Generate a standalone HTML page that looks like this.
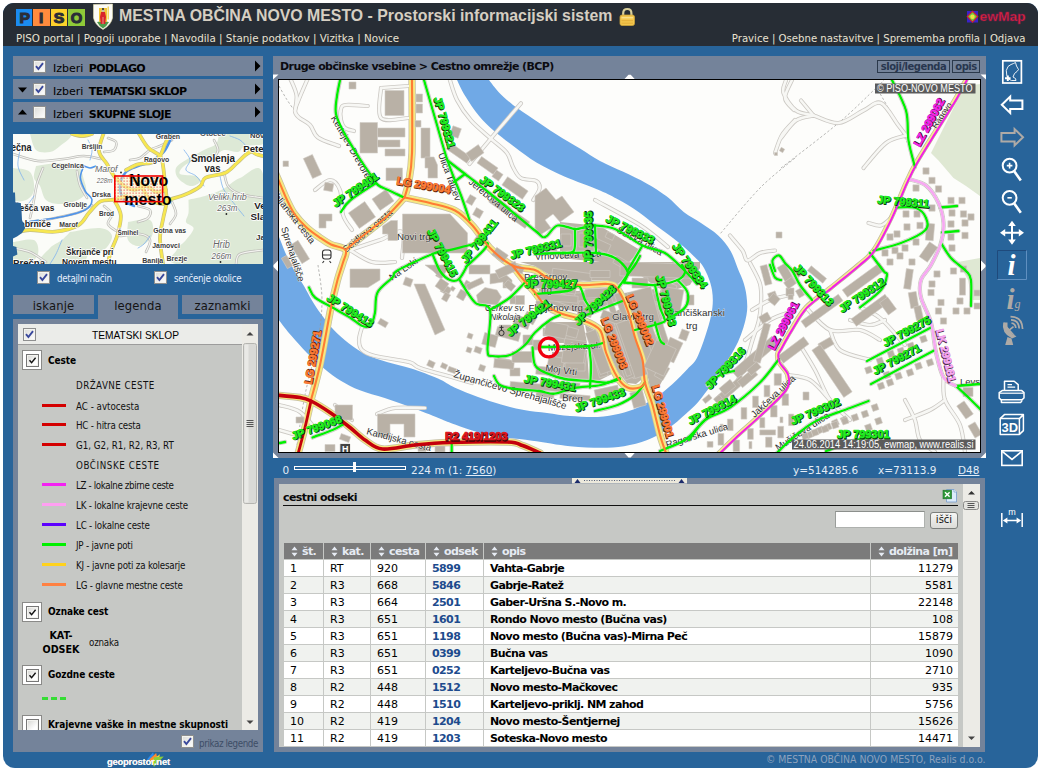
<!DOCTYPE html>
<html lang="sl">
<head>
<meta charset="utf-8">
<title>MESTNA OBČINA NOVO MESTO - Prostorski informacijski sistem</title>
<style>
html,body{margin:0;padding:0;background:#fff;}
body{width:1041px;height:772px;position:relative;overflow:hidden;font-family:"DejaVu Sans","Liberation Sans",sans-serif;font-size:11px;color:#000;}
.abs{position:absolute;}
#wrap{position:absolute;left:3px;top:3px;width:1035px;height:765px;background:#28649a;border-radius:11px 11px 12px 12px;overflow:hidden;}
#hdr{position:absolute;left:0;top:0;width:1035px;height:43px;background:#272d35;}
.vd{font-family:"DejaVu Sans","Liberation Sans",sans-serif;}
.ar{font-family:"Liberation Sans",sans-serif;}
.th{font-family:"DejaVu Sans Condensed","Liberation Sans",sans-serif;}
.nw{white-space:nowrap;}
#title{left:119px;top:7.2px;font:bold 15.85px "Liberation Sans",sans-serif;color:#d6cfc2;white-space:nowrap;}
.nav{top:32px;font-size:10.34px;color:#e9e2d2;white-space:nowrap;line-height:13px;}
.gp{background:#74839a;}
.row{left:13px;width:250px;height:20px;background:#74839a;}
.row span{position:absolute;top:6px;left:40px;font-size:11px;line-height:14px;white-space:nowrap;}
.cb{position:absolute;width:11px;height:11px;border:1px solid #8e8f8f;background:linear-gradient(135deg,#dcdcd8,#ffffff);box-shadow:inset 0 0 0 1px #f4f4f0;}
.cb svg{position:absolute;left:1px;top:1px;}
.tri{position:absolute;width:0;height:0;}
.tabt{top:298.7px;text-align:center;font-size:11.6px;line-height:14px;color:#141414;letter-spacing:0.15px;}
#leg .t{position:absolute;left:58px;font-family:"DejaVu Sans Condensed","Liberation Sans",sans-serif;font-size:9.7px;letter-spacing:-0.2px;line-height:13px;white-space:nowrap;color:#111;}
#leg .b{position:absolute;left:30px;font-family:"DejaVu Sans Condensed","Liberation Sans",sans-serif;font-weight:bold;font-size:10px;letter-spacing:-0.1px;line-height:13px;white-space:nowrap;color:#000;}
#leg .ln{position:absolute;left:24px;width:24px;height:3px;}
#leg .bx{position:absolute;left:4px;width:18px;height:18px;background:#fff;border:1px solid #8a8a88;}
#leg .bx .cb{left:3px;top:3px;border-color:#777;background:linear-gradient(135deg,#d4d4d0,#fff 70%);}
.row b{letter-spacing:-0.6px;margin-left:2px;}
.btn1{top:60px;height:11px;border:1px solid #2b394b;font-weight:bold;font-size:10px;line-height:11px;text-align:center;color:#27364e;letter-spacing:-0.5px;}
.sc{top:464px;font-size:10.5px;line-height:13px;color:#e3ecf7;}
#tb{position:absolute;left:284px;top:543px;width:675px;}
#tb .r{position:absolute;left:0;height:16px;width:675px;}
#tb .c{position:absolute;top:0;height:16px;line-height:16px;font-size:11px;white-space:nowrap;box-sizing:border-box;padding:1px 6px 0 6px;line-height:15px;overflow:hidden;}
#tb .h .c{background:#7b7b7b;color:#e6ebf3;font-weight:bold;letter-spacing:-0.6px;padding-left:18px;}
#tb .o .c{background:#ffffff;}
#tb .e .c{background:#f0f2ef;}
#tb .c1{left:0;width:39px;}#tb .c2{left:40px;width:46px;}#tb .c3{left:87px;width:54px;}#tb .c4{left:142px;width:57px;}#tb .c5{left:200px;width:386px;}#tb .c6{left:587px;width:87px;}
#tb .o .c4,#tb .e .c4{font-weight:bold;color:#1d4b8d;letter-spacing:-0.6px;}
#tb .o .c5,#tb .e .c5{font-weight:bold;letter-spacing:-0.6px;}
#tb .o .c6,#tb .e .c6{text-align:right;padding-right:5px;}
#tb .si{position:absolute;left:6.5px;top:3px;}
</style>
</head>
<body>
<div id="wrap"><div id="hdr"></div></div>
<!-- header -->
<div class="abs" style="left:16px;top:9px;width:16px;height:17px;background:#1b8cf0;"></div>
<div class="abs" style="left:33px;top:9px;width:17px;height:17px;background:#ff8b3d;"></div>
<div class="abs" style="left:51px;top:9px;width:16px;height:17px;background:#fdd22b;"></div>
<div class="abs" style="left:68px;top:9px;width:17px;height:17px;background:#8fca38;"></div>
<svg class="abs" style="left:16px;top:9px;" width="70" height="17" viewBox="0 0 70 17">
<g font-family="Liberation Sans, sans-serif" font-weight="bold" font-size="15" fill="#2a2e38" stroke="#2a2e38" stroke-width="1.1" text-anchor="middle">
<text x="8.7" y="13.9" textLength="10.5" lengthAdjust="spacingAndGlyphs">P</text>
<text x="25.2" y="13.9">I</text>
<text x="43" y="13.9" textLength="10.5" lengthAdjust="spacingAndGlyphs">S</text>
<text x="60.5" y="13.9" textLength="11.5" lengthAdjust="spacingAndGlyphs">O</text>
</g></svg>
<svg class="abs" style="left:92px;top:3px;" width="22" height="28" viewBox="0 0 22 28">
<path d="M1.5 1.5 L20.5 1 L20.5 15 Q19 22 11 26.5 Q3 22 1.5 15 Z" fill="#fbfbf6" stroke="#e8e0b0" stroke-width="0.6"/>
<path d="M5 19 Q11 17.5 17 19 Q15 23 11 25.5 Q7 23 5 19Z" fill="#4f9a4a"/>
<rect x="7" y="5" width="8" height="14" fill="#f2c736"/>
<rect x="15.6" y="3.5" width="1.2" height="13" fill="#f0d040"/>
<path d="M9 9 L13 9 L14 14 L13.2 21 L8.8 21 L8 14 Z" fill="#d8232a"/>
<circle cx="11" cy="7.6" r="1.5" fill="#c9b9a8"/>
<rect x="10" y="5.2" width="2" height="1.6" fill="#333"/>
<rect x="10.6" y="14" width="0.8" height="7" fill="#f5b0a0"/>
</svg>
<div id="title" class="abs">MESTNA OBČINA NOVO MESTO - Prostorski informacijski sistem</div>
<!-- lock -->
<svg class="abs" style="left:618px;top:7px;" width="18" height="20" viewBox="0 0 18 20">
<path d="M5.2 9 V6.2 Q5.2 2 9.3 2 Q13.4 2 13.4 6.2 V9" fill="none" stroke="#d9cf9a" stroke-width="2.2"/>
<rect x="2" y="8" width="14.5" height="10.5" rx="2" fill="#f3c64e" stroke="#caa23a" stroke-width="0.8"/>
<rect x="3.5" y="10" width="11.5" height="1.4" fill="#f9e08a"/>
<rect x="3.5" y="13" width="11.5" height="1.2" fill="#e6b23c"/>
<rect x="3.5" y="15.6" width="11.5" height="1.2" fill="#e6b23c"/>
</svg>
<div class="abs nav" id="navl" style="left:16px;">PISO portal | Pogoji uporabe | Navodila | Stanje podatkov | Vizitka | Novice</div>
<div class="abs nav" id="navr" style="right:15.5px;font-size:10.14px;">Pravice | Osebne nastavitve | Sprememba profila | Odjava</div>
<!-- ewmap logo -->
<svg class="abs" style="left:966px;top:10px;" width="64" height="16" viewBox="0 0 64 16">
<rect x="1" y="1" width="11" height="11.5" fill="#3a22c8"/>
<path d="M6.5 0.5 L12.5 6.5 L6.5 13 L0.5 6.5Z" fill="#d2202c"/>
<path d="M6.5 2.2 L10.8 6.6 L6.5 11.2 L2.2 6.6Z" fill="#6ad040"/>
<circle cx="6.5" cy="6.7" r="2.2" fill="#f0e040"/>
<text x="13.5" y="11.3" font-family="Liberation Sans, sans-serif" font-weight="bold" font-size="12.5" fill="#e02430" stroke="#7a1a5a" stroke-width="0.5" textLength="46" lengthAdjust="spacingAndGlyphs">ewMap</text>
</svg>
<!-- left panel -->
<svg width="0" height="0" style="position:absolute"><defs>
<symbol id="chk" viewBox="0 0 9 9"><path d="M1 4.2 L3.4 7 L8 1.2" fill="none" stroke="#39489c" stroke-width="1.9"/></symbol>
<symbol id="chkb" viewBox="0 0 9 9"><path d="M1.5 4.2 L3.6 6.6 L7.6 1.8" fill="none" stroke="#111" stroke-width="1.4"/></symbol>
</defs></svg>
<div class="abs row" style="top:56px;"><div class="cb" style="left:19.6px;top:3.6px;"><svg width="9" height="9"><use href="#chk"/></svg></div><span>Izberi <b>PODLAGO</b></span></div>
<div class="abs row" style="top:79px;"><div class="cb" style="left:19.6px;top:3.6px;"><svg width="9" height="9"><use href="#chk"/></svg></div><span>Izberi <b>TEMATSKI SKLOP</b></span></div>
<div class="abs row" style="top:102px;"><div class="cb" style="left:19.6px;top:3.6px;"></div><span>Izberi <b>SKUPNE SLOJE</b></span></div>
<svg class="abs" style="left:13px;top:56px;" width="250" height="66" viewBox="0 0 250 66">
<path d="M242 4.5 L247.5 10 L242 15.5Z M242 27.5 L247.5 33 L242 38.5Z M242 50.5 L247.5 56 L242 61.5Z" fill="#000"/>
<path d="M5 31.5 L14 31.5 L9.5 36.5Z" fill="#000"/>
<path d="M5 58.5 L14 58.5 L9.5 53.5Z" fill="#000"/>
</svg>
<!-- overview map placeholder -->
<div id="ovmap" class="abs" style="left:13px;top:134px;width:250px;height:130px;background:#f1f3ea;overflow:hidden;"></div>
<div class="cb abs" style="left:37px;top:271px;"><svg width="9" height="9"><use href="#chk"/></svg></div>
<div class="abs th nw" id="t_det" style="left:57px;top:272px;font-size:9.7px;letter-spacing:-0.3px;line-height:13px;color:#e6eefc;">detajlni način</div>
<div class="cb abs" style="left:154px;top:271px;"><svg width="9" height="9"><use href="#chk"/></svg></div>
<div class="abs th nw" id="t_sen" style="left:174px;top:272px;font-size:9.7px;letter-spacing:-0.3px;line-height:13px;color:#e6eefc;">senčenje okolice</div>
<!-- tabs -->
<div class="abs gp" style="left:13px;top:295px;width:81px;height:19px;"></div>
<div class="abs gp" style="left:98px;top:295px;width:80px;height:25px;"></div>
<div class="abs gp" style="left:182px;top:295px;width:81px;height:19px;"></div>
<div class="abs nw tabt" id="tab1" style="left:13px;width:81px;">iskanje</div>
<div class="abs nw tabt" id="tab2" style="left:98px;width:80px;">legenda</div>
<div class="abs nw tabt" id="tab3" style="left:182px;width:81px;">zaznamki</div>
<div class="abs gp" style="left:13px;top:319px;width:250px;height:433px;"></div>
<div id="leg" class="abs" style="left:18px;top:324px;width:240px;height:406px;background:#c6c8c5;overflow:hidden;">
<div class="abs" style="left:0;top:0;width:224px;height:20px;background:#ebece9;border-bottom:1px solid #9c9c9c;"></div>
<div class="cb" style="left:5px;top:4px;"><svg width="9" height="9"><use href="#chk"/></svg></div>
<div class="abs ar nw" id="lg_h" style="left:0;top:5px;width:224px;text-align:center;font-size:10.2px;line-height:13px;padding-left:11px;box-sizing:border-box;">TEMATSKI SKLOP</div>
<div class="abs" style="left:224px;top:0;width:16px;height:406px;background:#ecebe6;"></div>
<svg class="abs" style="left:224px;top:0;" width="16" height="406" viewBox="0 0 16 406"><path d="M4.5 11.5 L8 8 L11.5 11.5Z" fill="#444"/><path d="M4.5 396.5 L8 400 L11.5 396.5Z" fill="#444"/><rect x="1.5" y="19.5" width="13" height="160" rx="2" fill="#d9d9d6" stroke="#b4b4b0"/><rect x="2.5" y="20.5" width="4" height="158" fill="#e9e9e6"/><path d="M4.5 96.5h7M4.5 98.5h7M4.5 100.5h7M4.5 102.5h7" stroke="#555" stroke-width="1"/></svg>
<div class="bx" style="top:26px;"><div class="cb"><svg width="9" height="9"><use href="#chkb"/></svg></div></div>
<div class="b" style="top:30px;">Ceste</div>
<div class="t" style="top:54.5px;letter-spacing:0.46px;">DRŽAVNE CESTE</div>
<div class="t" style="top:75.5px;letter-spacing:0;">AC - avtocesta</div>
<div class="ln" style="top:79.8px;background:#d40000;"></div>
<div class="t" style="top:95.1px;">HC - hitra cesta</div>
<div class="ln" style="top:99.4px;background:#d40000;"></div>
<div class="t" style="top:115.1px;letter-spacing:0;">G1, G2, R1, R2, R3, RT</div>
<div class="ln" style="top:119.4px;background:#d40000;"></div>
<div class="t" style="top:135.1px;letter-spacing:0.6px;">OBČINSKE CESTE</div>
<div class="t" style="top:155.1px;letter-spacing:-0.36px;">LZ - lokalne zbirne ceste</div>
<div class="ln" style="top:159.4px;background:#f322f3;"></div>
<div class="t" style="top:175.1px;">LK - lokalne krajevne ceste</div>
<div class="ln" style="top:179.4px;background:#ff9ff2;"></div>
<div class="t" style="top:195.1px;">LC - lokalne ceste</div>
<div class="ln" style="top:199.4px;background:#5d00ff;"></div>
<div class="t" style="top:215.0px;">JP - javne poti</div>
<div class="ln" style="top:219.3px;background:#00f000;"></div>
<div class="t" style="top:235.0px;">KJ - javne poti za kolesarje</div>
<div class="ln" style="top:239.3px;background:#ffd21e;"></div>
<div class="t" style="top:255.0px;">LG - glavne mestne ceste</div>
<div class="ln" style="top:259.3px;background:#ff8142;"></div>
<div class="bx" style="top:277.5px;"><div class="cb"><svg width="9" height="9"><use href="#chkb"/></svg></div></div>
<div class="b" style="top:280.5px;">Oznake cest</div>
<div class="abs vd nw" style="left:20px;top:305px;width:46px;text-align:center;font-weight:bold;font-size:9.6px;line-height:13.6px;white-space:normal;">KAT-<br>ODSEK</div>
<div class="t" style="left:71px;top:311.8px;">oznaka</div>
<div class="bx" style="top:340.6px;"><div class="cb"><svg width="9" height="9"><use href="#chkb"/></svg></div></div>
<div class="b" style="top:343.7px;">Gozdne ceste</div>
<div class="abs" style="left:24.3px;top:372.6px;width:6px;height:3.4px;background:#35dd35;"></div>
<div class="abs" style="left:33px;top:372.6px;width:6px;height:3.4px;background:#35dd35;"></div>
<div class="abs" style="left:42px;top:372.6px;width:6px;height:3.4px;background:#35dd35;"></div>
<div class="bx" style="top:391.29999999999995px;"><div class="cb"></div></div>
<div class="b" style="top:394px;">Krajevne vaške in mestne skupnosti</div>
</div>
<div class="cb abs" style="left:181px;top:735px;"><svg width="9" height="9"><use href="#chk"/></svg></div>
<div class="abs th nw" id="t_prik" style="left:199px;top:737px;font-size:9.7px;letter-spacing:-0.37px;line-height:13px;color:#3d4d66;">prikaz legende</div>
<svg class="abs" style="left:146px;top:751px;" width="20" height="17" viewBox="146 751 20 17"><polygon points="146.9,759.6 153.1,752.3 153.8,755.0 149.2,760.4" fill="#2a8cf0"/><polygon points="149.2,759.6 156.2,753.1 156.9,756.5 152.3,762.7" fill="#ff8a30"/><polygon points="151.5,760.4 160.0,754.2 159.2,757.3 153.8,765.8" fill="#f7dc30"/><polygon points="153.8,757.3 163.8,756.5 153.8,766.9" fill="#8ccf3c"/></svg>
<div class="abs ar nw" id="geo" style="left:107px;top:756px;font-size:9.4px;line-height:11px;font-weight:bold;color:#f4f4f4;letter-spacing:-0.2px;text-shadow:0 0 0.6px #fff;">geoprostor.net</div>

<div class="abs" style="left:13px;top:134px;width:250px;height:130px;overflow:hidden;">
<svg width="250" height="130" viewBox="13 134 250 130" style="position:absolute;left:0;top:0;">
<rect x="13" y="134" width="250" height="130" fill="#fbfcf8"/>
<path d="M188.5 199.7 C191.2 199.1 199.4 197.7 205.0 196.0 C210.6 194.3 216.4 192.6 222.2 189.6 C228.0 186.6 233.2 180.6 240.0 178.0 C246.8 175.4 259.2 159.7 263.0 174.0 C266.8 188.3 277.4 249.0 263.0 264.0 C248.6 279.0 191.1 266.3 176.7 264.0 C162.3 261.7 175.1 254.0 176.7 250.0 C178.2 246.0 183.2 243.6 186.0 240.0 C188.8 236.4 193.6 231.3 193.6 228.3 C193.6 225.3 186.8 224.6 186.0 222.0 C185.2 219.4 188.1 216.7 188.5 213.0 C188.9 209.3 188.5 201.9 188.5 199.7Z" fill="#dde9d6"/>
<path d="M219.0 134.0 C226.3 134.0 255.7 132.3 263.0 134.0 C270.3 135.7 266.0 142.0 263.0 144.0 C260.0 146.0 249.2 144.7 245.0 146.0 C240.8 147.3 241.5 151.3 238.0 152.0 C234.5 152.7 228.0 149.3 224.0 150.0 C220.0 150.7 218.7 154.3 214.0 156.0 C209.3 157.7 201.0 158.3 196.0 160.0 C191.0 161.7 186.7 163.7 184.0 166.0 C181.3 168.3 178.0 172.3 180.0 174.0 C182.0 175.7 192.7 174.7 196.0 176.0 C199.3 177.3 201.0 180.3 200.0 182.0 C199.0 183.7 193.7 186.7 190.0 186.0 C186.3 185.3 180.3 181.0 178.0 178.0 C175.7 175.0 174.7 171.0 176.0 168.0 C177.3 165.0 181.3 163.0 186.0 160.0 C190.7 157.0 199.0 152.7 204.0 150.0 C209.0 147.3 213.5 146.7 216.0 144.0 C218.5 141.3 218.5 135.7 219.0 134.0Z" fill="#dde9d6"/>
<path d="M30.0 134.0 C36.7 134.0 65.0 132.0 70.0 134.0 C75.0 136.0 63.3 143.0 60.0 146.0 C56.7 149.0 54.0 151.3 50.0 152.0 C46.0 152.7 39.3 153.0 36.0 150.0 C32.7 147.0 31.0 136.7 30.0 134.0Z" fill="#dde9d6"/>
<path d="M36.0 166.0 C40.0 165.5 53.0 163.0 60.0 163.0 C67.0 163.0 74.0 163.2 78.0 166.0 C82.0 168.8 82.7 175.7 84.0 180.0 C85.3 184.3 87.0 188.7 86.0 192.0 C85.0 195.3 82.3 198.0 78.0 200.0 C73.7 202.0 65.3 204.0 60.0 204.0 C54.7 204.0 49.3 203.0 46.0 200.0 C42.7 197.0 42.0 189.7 40.0 186.0 C38.0 182.3 34.7 181.3 34.0 178.0 C33.3 174.7 35.7 168.0 36.0 166.0Z" fill="#dde9d6"/>
<path d="M13.0 168.0 C15.8 168.7 26.5 168.3 30.0 172.0 C33.5 175.7 34.7 185.3 34.0 190.0 C33.3 194.7 29.5 198.7 26.0 200.0 C22.5 201.3 15.2 203.3 13.0 198.0 C10.8 192.7 13.0 173.0 13.0 168.0Z" fill="#dde9d6"/>
<path d="M70.0 232.0 C75.0 231.3 93.0 227.3 100.0 228.0 C107.0 228.7 111.3 232.3 112.0 236.0 C112.7 239.7 107.7 247.3 104.0 250.0 C100.3 252.7 94.0 249.7 90.0 252.0 C86.0 254.3 88.3 262.0 80.0 264.0 C71.7 266.0 45.0 266.7 40.0 264.0 C35.0 261.3 46.3 252.0 50.0 248.0 C53.7 244.0 58.7 242.7 62.0 240.0 C65.3 237.3 68.7 233.3 70.0 232.0Z" fill="#dde9d6"/>
<path d="M128.0 222.0 C131.7 221.7 146.0 217.7 150.0 220.0 C154.0 222.3 153.7 231.7 152.0 236.0 C150.3 240.3 144.0 245.3 140.0 246.0 C136.0 246.7 130.0 244.0 128.0 240.0 C126.0 236.0 128.0 225.0 128.0 222.0Z" fill="#dde9d6"/>
<path d="M13.0 242.0 C16.5 241.7 29.8 238.0 34.0 240.0 C38.2 242.0 39.0 250.0 38.0 254.0 C37.0 258.0 32.2 262.3 28.0 264.0 C23.8 265.7 15.5 267.7 13.0 264.0 C10.5 260.3 13.0 245.7 13.0 242.0Z" fill="#dde9d6"/>
<g fill="none" stroke-linecap="round" stroke-linejoin="round">
<g stroke="#bdbdb8" stroke-width="2.6"><path d="M13.0 154.0 C17.2 155.2 29.6 160.2 38.0 161.0 C46.4 161.8 55.9 159.8 63.5 159.0 C71.1 158.2 77.5 156.0 83.7 156.0 C89.9 156.0 97.8 158.5 100.6 159.0"/><path d="M43.0 168.0 C42.0 170.7 38.7 177.8 37.0 184.0 C35.3 190.2 34.2 199.3 33.0 205.0 C31.8 210.7 30.5 215.8 30.0 218.0"/><path d="M77.0 171.0 C77.5 173.3 78.3 180.5 80.0 185.0 C81.7 189.5 85.8 195.8 87.0 198.0"/><path d="M30.0 222.0 C34.2 221.3 46.7 219.7 55.0 218.0 C63.3 216.3 73.8 214.2 80.0 212.0 C86.2 209.8 90.0 206.2 92.0 205.0"/><path d="M104.0 206.0 C105.3 207.3 111.3 211.0 112.0 214.0 C112.7 217.0 107.0 221.0 108.0 224.0 C109.0 227.0 116.3 230.7 118.0 232.0"/><path d="M120.0 236.0 C123.3 235.7 135.0 233.3 140.0 234.0 C145.0 234.7 149.0 237.0 150.0 240.0 C151.0 243.0 146.7 250.0 146.0 252.0"/><path d="M172.0 202.0 C172.7 204.0 176.3 210.3 176.0 214.0 C175.7 217.7 171.0 222.3 170.0 224.0"/><path d="M138.0 206.0 C140.0 206.7 148.3 208.0 150.0 210.0 C151.7 212.0 150.0 216.0 148.0 218.0 C146.0 220.0 139.7 221.3 138.0 222.0"/><path d="M224.0 172.0 C224.7 174.3 225.3 182.3 228.0 186.0 C230.7 189.7 234.2 192.0 240.0 194.0 C245.8 196.0 259.2 197.3 263.0 198.0"/><path d="M214.0 140.0 C214.7 141.7 218.0 147.0 218.0 150.0 C218.0 153.0 214.7 156.7 214.0 158.0"/><path d="M236.0 264.0 C236.7 262.3 235.5 256.3 240.0 254.0 C244.5 251.7 259.2 250.7 263.0 250.0"/><path d="M130.0 160.0 C131.7 159.7 136.7 159.7 140.0 158.0 C143.3 156.3 146.7 152.0 150.0 150.0 C153.3 148.0 156.3 147.7 160.0 146.0 C163.7 144.3 170.0 141.0 172.0 140.0"/><path d="M108.0 138.0 C109.3 138.7 115.0 140.0 116.0 142.0 C117.0 144.0 116.0 148.3 114.0 150.0 C112.0 151.7 105.7 151.7 104.0 152.0"/><path d="M13.0 248.0 C15.8 248.7 24.5 249.7 30.0 252.0 C35.5 254.3 43.3 260.3 46.0 262.0"/></g>
<g stroke="#f4f4f0" stroke-width="1.2"><path d="M13.0 154.0 C17.2 155.2 29.6 160.2 38.0 161.0 C46.4 161.8 55.9 159.8 63.5 159.0 C71.1 158.2 77.5 156.0 83.7 156.0 C89.9 156.0 97.8 158.5 100.6 159.0"/><path d="M43.0 168.0 C42.0 170.7 38.7 177.8 37.0 184.0 C35.3 190.2 34.2 199.3 33.0 205.0 C31.8 210.7 30.5 215.8 30.0 218.0"/><path d="M77.0 171.0 C77.5 173.3 78.3 180.5 80.0 185.0 C81.7 189.5 85.8 195.8 87.0 198.0"/><path d="M30.0 222.0 C34.2 221.3 46.7 219.7 55.0 218.0 C63.3 216.3 73.8 214.2 80.0 212.0 C86.2 209.8 90.0 206.2 92.0 205.0"/><path d="M104.0 206.0 C105.3 207.3 111.3 211.0 112.0 214.0 C112.7 217.0 107.0 221.0 108.0 224.0 C109.0 227.0 116.3 230.7 118.0 232.0"/><path d="M120.0 236.0 C123.3 235.7 135.0 233.3 140.0 234.0 C145.0 234.7 149.0 237.0 150.0 240.0 C151.0 243.0 146.7 250.0 146.0 252.0"/><path d="M172.0 202.0 C172.7 204.0 176.3 210.3 176.0 214.0 C175.7 217.7 171.0 222.3 170.0 224.0"/><path d="M138.0 206.0 C140.0 206.7 148.3 208.0 150.0 210.0 C151.7 212.0 150.0 216.0 148.0 218.0 C146.0 220.0 139.7 221.3 138.0 222.0"/><path d="M224.0 172.0 C224.7 174.3 225.3 182.3 228.0 186.0 C230.7 189.7 234.2 192.0 240.0 194.0 C245.8 196.0 259.2 197.3 263.0 198.0"/><path d="M214.0 140.0 C214.7 141.7 218.0 147.0 218.0 150.0 C218.0 153.0 214.7 156.7 214.0 158.0"/><path d="M236.0 264.0 C236.7 262.3 235.5 256.3 240.0 254.0 C244.5 251.7 259.2 250.7 263.0 250.0"/><path d="M130.0 160.0 C131.7 159.7 136.7 159.7 140.0 158.0 C143.3 156.3 146.7 152.0 150.0 150.0 C153.3 148.0 156.3 147.7 160.0 146.0 C163.7 144.3 170.0 141.0 172.0 140.0"/><path d="M108.0 138.0 C109.3 138.7 115.0 140.0 116.0 142.0 C117.0 144.0 116.0 148.3 114.0 150.0 C112.0 151.7 105.7 151.7 104.0 152.0"/><path d="M13.0 248.0 C15.8 248.7 24.5 249.7 30.0 252.0 C35.5 254.3 43.3 260.3 46.0 262.0"/></g>
<g stroke="#7fb2ee" stroke-width="0.8"><path d="M20.0 150.0 C19.7 152.7 17.3 161.0 18.0 166.0 C18.7 171.0 23.0 177.7 24.0 180.0"/><path d="M34.0 196.0 C33.0 197.3 30.3 201.7 28.0 204.0 C25.7 206.3 21.3 209.0 20.0 210.0"/><path d="M62.0 240.0 C61.0 242.3 58.0 250.0 56.0 254.0 C54.0 258.0 51.0 262.3 50.0 264.0"/><path d="M184.0 150.0 C185.0 151.7 189.7 156.7 190.0 160.0 C190.3 163.3 185.0 167.3 186.0 170.0 C187.0 172.7 193.0 173.3 196.0 176.0 C199.0 178.7 202.7 184.3 204.0 186.0"/><path d="M220.0 176.0 C220.7 178.3 221.3 185.0 224.0 190.0 C226.7 195.0 232.7 201.7 236.0 206.0 C239.3 210.3 242.7 214.3 244.0 216.0"/><path d="M88.0 140.0 C88.7 141.7 91.7 146.7 92.0 150.0 C92.3 153.3 90.3 158.3 90.0 160.0"/><path d="M150.0 236.0 C149.0 237.3 146.0 242.0 144.0 244.0 C142.0 246.0 139.0 247.3 138.0 248.0"/><path d="M230.0 136.0 C231.7 136.7 237.3 138.3 240.0 140.0 C242.7 141.7 245.0 145.0 246.0 146.0"/></g>
<g stroke="#4f94ea" stroke-width="1.6"><path d="M83.7 166.0 C83.2 168.0 80.1 173.6 80.4 177.8 C80.7 182.0 83.5 187.7 85.4 191.3 C87.3 195.0 92.0 196.6 92.0 199.7 C92.0 202.8 90.2 207.0 85.4 209.8 C80.7 212.6 72.8 214.5 63.5 216.5 C54.2 218.5 35.4 220.8 29.8 221.6"/><path d="M83.7 166.0 C84.8 166.3 88.0 168.0 90.0 168.0 C92.0 168.0 95.0 166.3 96.0 166.0"/></g>
<g stroke="#4f94ea" stroke-width="2.6"><path d="M172.0 136.0 C170.6 138.8 167.3 148.1 163.3 152.5 C159.3 156.9 152.2 160.3 148.0 162.6 C143.8 164.8 141.7 164.4 138.0 166.0 C134.3 167.6 129.0 168.7 126.0 172.0 C123.0 175.3 120.3 181.3 120.0 186.0 C119.7 190.7 121.7 196.7 124.0 200.0 C126.3 203.3 132.3 205.0 134.0 206.0"/></g>
<g stroke="#c2bc86" stroke-width="3.8"><path d="M13.0 233.4 C15.8 232.8 22.8 230.3 29.8 230.0 C36.8 229.7 46.9 232.5 55.0 231.7 C63.1 230.9 73.1 228.1 78.7 225.0 C84.3 221.9 85.2 216.9 88.8 213.0 C92.4 209.1 96.4 203.6 100.6 201.4 C104.8 199.2 109.8 200.6 114.0 199.7 C118.2 198.8 124.0 196.6 126.0 196.0"/><path d="M104.0 132.0 C103.2 135.2 98.5 145.7 99.0 151.0 C99.5 156.3 104.5 159.8 107.0 164.0 C109.5 168.2 111.2 172.3 114.0 176.0 C116.8 179.7 122.3 184.3 124.0 186.0"/><path d="M114.0 199.7 C115.1 202.2 120.2 209.1 120.8 215.0 C121.4 220.9 119.1 228.8 117.4 235.0 C115.7 241.2 112.4 246.8 110.7 252.0 C109.0 257.2 107.9 263.7 107.3 266.0"/><path d="M138.0 132.0 C139.7 134.6 144.3 143.5 148.0 147.5 C151.7 151.5 157.4 152.6 160.0 156.0 C162.6 159.4 162.5 162.9 163.3 167.7 C164.1 172.4 164.4 178.9 165.0 184.5 C165.6 190.1 166.9 195.8 166.6 201.4 C166.3 207.0 164.4 211.8 163.3 218.0 C162.2 224.2 160.0 230.4 160.0 238.4 C160.0 246.4 162.8 261.4 163.3 266.0"/><path d="M126.0 170.0 C128.0 169.1 133.8 165.5 138.0 164.3 C142.2 163.1 147.8 164.0 151.5 162.6 C155.2 161.2 157.8 159.1 160.0 156.0 C162.2 152.9 163.2 148.0 165.0 144.0 C166.8 140.0 170.0 134.0 171.0 132.0"/><path d="M166.6 201.4 C167.4 201.0 168.6 200.0 171.7 198.9 C174.8 197.8 180.4 196.7 185.2 194.6 C190.0 192.5 196.9 189.0 200.3 186.2 C203.7 183.4 201.2 180.1 205.4 177.8 C209.6 175.6 220.3 175.2 225.6 172.7 C230.9 170.2 233.5 166.0 237.4 162.6 C241.3 159.2 244.6 154.8 249.2 152.5 C253.8 150.2 262.4 149.6 265.0 149.0"/><path d="M72.0 134.0 C73.7 134.3 78.7 136.0 82.0 136.0 C85.3 136.0 90.3 134.3 92.0 134.0"/><path d="M250.0 150.0 C251.0 150.7 253.8 153.0 256.0 154.0 C258.2 155.0 261.8 155.7 263.0 156.0"/><path d="M124.0 186.0 C125.7 186.7 130.3 190.0 134.0 190.0 C137.7 190.0 142.3 185.7 146.0 186.0 C149.7 186.3 152.7 191.3 156.0 192.0 C159.3 192.7 164.3 190.3 166.0 190.0"/><path d="M130.0 176.0 C131.7 177.3 136.7 180.0 140.0 184.0 C143.3 188.0 146.2 196.7 150.0 200.0 C153.8 203.3 160.8 203.3 163.0 204.0"/></g>
<g stroke="#f7e750" stroke-width="2.6"><path d="M13.0 233.4 C15.8 232.8 22.8 230.3 29.8 230.0 C36.8 229.7 46.9 232.5 55.0 231.7 C63.1 230.9 73.1 228.1 78.7 225.0 C84.3 221.9 85.2 216.9 88.8 213.0 C92.4 209.1 96.4 203.6 100.6 201.4 C104.8 199.2 109.8 200.6 114.0 199.7 C118.2 198.8 124.0 196.6 126.0 196.0"/><path d="M104.0 132.0 C103.2 135.2 98.5 145.7 99.0 151.0 C99.5 156.3 104.5 159.8 107.0 164.0 C109.5 168.2 111.2 172.3 114.0 176.0 C116.8 179.7 122.3 184.3 124.0 186.0"/><path d="M114.0 199.7 C115.1 202.2 120.2 209.1 120.8 215.0 C121.4 220.9 119.1 228.8 117.4 235.0 C115.7 241.2 112.4 246.8 110.7 252.0 C109.0 257.2 107.9 263.7 107.3 266.0"/><path d="M138.0 132.0 C139.7 134.6 144.3 143.5 148.0 147.5 C151.7 151.5 157.4 152.6 160.0 156.0 C162.6 159.4 162.5 162.9 163.3 167.7 C164.1 172.4 164.4 178.9 165.0 184.5 C165.6 190.1 166.9 195.8 166.6 201.4 C166.3 207.0 164.4 211.8 163.3 218.0 C162.2 224.2 160.0 230.4 160.0 238.4 C160.0 246.4 162.8 261.4 163.3 266.0"/><path d="M126.0 170.0 C128.0 169.1 133.8 165.5 138.0 164.3 C142.2 163.1 147.8 164.0 151.5 162.6 C155.2 161.2 157.8 159.1 160.0 156.0 C162.2 152.9 163.2 148.0 165.0 144.0 C166.8 140.0 170.0 134.0 171.0 132.0"/><path d="M166.6 201.4 C167.4 201.0 168.6 200.0 171.7 198.9 C174.8 197.8 180.4 196.7 185.2 194.6 C190.0 192.5 196.9 189.0 200.3 186.2 C203.7 183.4 201.2 180.1 205.4 177.8 C209.6 175.6 220.3 175.2 225.6 172.7 C230.9 170.2 233.5 166.0 237.4 162.6 C241.3 159.2 244.6 154.8 249.2 152.5 C253.8 150.2 262.4 149.6 265.0 149.0"/><path d="M72.0 134.0 C73.7 134.3 78.7 136.0 82.0 136.0 C85.3 136.0 90.3 134.3 92.0 134.0"/><path d="M250.0 150.0 C251.0 150.7 253.8 153.0 256.0 154.0 C258.2 155.0 261.8 155.7 263.0 156.0"/><path d="M124.0 186.0 C125.7 186.7 130.3 190.0 134.0 190.0 C137.7 190.0 142.3 185.7 146.0 186.0 C149.7 186.3 152.7 191.3 156.0 192.0 C159.3 192.7 164.3 190.3 166.0 190.0"/><path d="M130.0 176.0 C131.7 177.3 136.7 180.0 140.0 184.0 C143.3 188.0 146.2 196.7 150.0 200.0 C153.8 203.3 160.8 203.3 163.0 204.0"/></g>
</g>
<defs><pattern id="rd" width="3" height="3" patternUnits="userSpaceOnUse"><rect x="0.6" y="0.6" width="1" height="1" fill="#e82020"/></pattern></defs>
<rect x="114.8" y="176" width="47.8" height="25.6" fill="#fdf6c8" fill-opacity="0.55"/><rect x="114.8" y="176" width="47.8" height="25.6" fill="url(#rd)"/>
<g font-family="Liberation Sans, sans-serif" stroke="#fff" stroke-width="1.4" paint-order="stroke"><text x="11" y="151" font-size="10" fill="#222" font-weight="bold" textLength="20.5" lengthAdjust="spacingAndGlyphs">ečna</text><text x="81.7" y="149" font-size="7.6" fill="#3c3c3c" font-weight="bold" textLength="20.6" lengthAdjust="spacingAndGlyphs">Bršljin</text><text x="51.4" y="168" font-size="7.6" fill="#3c3c3c" font-weight="bold" textLength="32.3" lengthAdjust="spacingAndGlyphs">Cegelnica</text><text x="95" y="172" font-size="9.5" fill="#666" font-style="italic" textLength="22.5" lengthAdjust="spacingAndGlyphs">Marof</text><text x="96.7" y="183" font-size="8" fill="#666" font-style="italic" textLength="15.7" lengthAdjust="spacingAndGlyphs">228m</text><text x="92" y="197" font-size="7.6" fill="#3c3c3c" font-weight="bold" textLength="18.7" lengthAdjust="spacingAndGlyphs">Drska</text><text x="63.5" y="207" font-size="7.6" fill="#3c3c3c" font-weight="bold" textLength="23.5" lengthAdjust="spacingAndGlyphs">Groblje</text><text x="13.5" y="211" font-size="9.8" fill="#222" font-weight="bold" textLength="40.8" lengthAdjust="spacingAndGlyphs">Češča vas</text><text x="99" y="215.5" font-size="7.6" fill="#3c3c3c" font-weight="bold" textLength="15" lengthAdjust="spacingAndGlyphs">Brod</text><text x="13" y="227.3" font-size="9.8" fill="#222" font-weight="bold" textLength="38" lengthAdjust="spacingAndGlyphs">Dobrniče</text><text x="59.3" y="227.3" font-size="7.6" fill="#3c3c3c" font-weight="bold" textLength="18.6" lengthAdjust="spacingAndGlyphs">Marof</text><text x="117.4" y="235" font-size="7.6" fill="#3c3c3c" font-weight="bold" textLength="21" lengthAdjust="spacingAndGlyphs">Šmihel</text><text x="66" y="255" font-size="9.6" fill="#222" font-weight="bold" textLength="47.2" lengthAdjust="spacingAndGlyphs">Škrjanče pri</text><text x="61.9" y="264.6" font-size="9.6" fill="#222" font-weight="bold" textLength="54.7" lengthAdjust="spacingAndGlyphs">Novem mestu</text><text x="13" y="266" font-size="9.6" fill="#222" font-weight="bold">Prečna</text><text x="155.7" y="139" font-size="7.6" fill="#3c3c3c" font-weight="bold" textLength="24.3" lengthAdjust="spacingAndGlyphs">Graben</text><text x="143.9" y="162.4" font-size="7.6" fill="#3c3c3c" font-weight="bold" textLength="25.3" lengthAdjust="spacingAndGlyphs">Ragovo</text><text x="191" y="161.6" font-size="10.6" fill="#222" font-weight="bold" textLength="43.9" lengthAdjust="spacingAndGlyphs">Smolenja</text><text x="204.5" y="171.8" font-size="10.6" fill="#222" font-weight="bold" textLength="16" lengthAdjust="spacingAndGlyphs">vas</text><text x="243.3" y="151.5" font-size="9.6" fill="#222" font-weight="bold">Petelinjek</text><text x="207.9" y="200" font-size="9.5" fill="#666" font-style="italic" textLength="38.8" lengthAdjust="spacingAndGlyphs">Veliki hrib</text><text x="217.2" y="210.5" font-size="8.6" fill="#666" font-style="italic" textLength="20.2" lengthAdjust="spacingAndGlyphs">263m</text><text x="254.2" y="209" font-size="9.8" fill="#222" font-weight="bold">Velike</text><text x="250.5" y="219.5" font-size="9.8" fill="#222" font-weight="bold">Slatnik</text><text x="153.2" y="233.2" font-size="7.6" fill="#3c3c3c" font-weight="bold" textLength="32.8" lengthAdjust="spacingAndGlyphs">Gotna vas</text><text x="256" y="240" font-size="8" fill="#333" font-weight="bold">Jama</text><text x="152.3" y="247.5" font-size="7.6" fill="#3c3c3c" font-weight="bold" textLength="27.5" lengthAdjust="spacingAndGlyphs">Jamovci</text><text x="213" y="248.2" font-size="10" fill="#666" font-style="italic" textLength="16.8" lengthAdjust="spacingAndGlyphs">Hrib</text><text x="211.6" y="258.5" font-size="8.6" fill="#666" font-style="italic" textLength="19.9" lengthAdjust="spacingAndGlyphs">266m</text><text x="142.2" y="262.7" font-size="7.6" fill="#3c3c3c" font-weight="bold" textLength="21.1" lengthAdjust="spacingAndGlyphs">Banija</text><text x="166.6" y="260.5" font-size="7.6" fill="#3c3c3c" font-weight="bold" textLength="20.8" lengthAdjust="spacingAndGlyphs">Brezje</text><text x="250" y="138" font-size="7.6" fill="#3c3c3c" font-weight="bold">Nova</text><text x="200" y="135.5" font-size="7.6" fill="#555" font-weight="bold">Otočec</text></g>
<path d="M13 192.5 L15 192.5 L15.4 202.5 L20.8 203 L21.6 212 L22 220 L25.2 228 L22 233 L17 236.5 L13 238.6Z M13 246 L16.4 247 L17.4 254.5 L13 256.5Z" fill="#28649a"/>
<circle cx="226.4" cy="214" r="0.9" fill="#222"/><circle cx="220.5" cy="262" r="0.9" fill="#222"/><circle cx="121" cy="172.5" r="0.9" fill="#222"/>
<g font-family="Liberation Sans, sans-serif" font-weight="bold" font-size="15.6" fill="#000"><text x="129.3" y="185.6" textLength="39" lengthAdjust="spacingAndGlyphs">Novo</text><text x="124.2" y="204.9" textLength="47.5" lengthAdjust="spacingAndGlyphs">mesto</text></g>
<rect x="114.8" y="176" width="47.8" height="25.6" fill="none" stroke="#f00000" stroke-width="1.6"/>
</svg>
</div>
<!-- map frame -->
<div class="abs gp" style="left:273px;top:56px;width:713px;height:402px;"></div>
<div class="abs nw" id="maptitle" style="left:280px;top:60px;font-weight:bold;font-size:11px;line-height:14px;letter-spacing:-0.57px;color:#0b0b10;">Druge občinske vsebine &gt; Cestno omrežje (BCP)</div>
<div class="abs nw btn1" style="left:877px;width:71px;">sloji/legenda</div>
<div class="abs nw btn1" style="left:952px;width:26px;">opis</div>
<svg class="abs" style="left:273px;top:56px;" width="713" height="402" viewBox="0 0 713 402">
<g fill="#fff">
<path d="M0 18.5 L5.5 18.5 L0 23.5Z"/>
<path d="M713 18.5 L707.5 18.5 L713 23.5Z"/>
<path d="M351.5 23 L355.5 18.7 L357.7 18.7 L361.7 23Z"/>
<path d="M0 402 L0 396.5 L5.5 402Z"/>
<path d="M713 402 L713 396.5 L707.5 402Z"/>
<path d="M351.5 397 L361.7 397 L357.7 401.5 L355.5 401.5Z"/>
<path d="M5 204.5 L5 215.5 L0.5 211 L0.5 209Z"/>
<path d="M708 204.5 L708 215.5 L712.5 211 L712.5 209Z"/>
</g></svg>
<div class="abs" style="left:278px;top:79px;width:703px;height:374px;background:#000;"></div>
<div id="map" class="abs" style="left:279px;top:80px;width:701px;height:372px;background:#fefefe;overflow:hidden;">
</div>
<!-- scale row -->
<div class="abs nw sc" style="left:282.5px;">0</div>
<div class="abs" style="left:294px;top:466px;width:110px;height:2px;border:1px solid #fff;"></div>
<div class="abs" style="left:353px;top:462px;width:3px;height:10px;background:#fff;"></div>
<div class="abs nw sc" id="sc1" style="left:411px;">224 m (1: <u>7560</u>)</div>
<div class="abs nw sc" id="sc2" style="left:793px;">y=514285.6</div>
<div class="abs nw sc" id="sc3" style="left:878px;">x=73113.9</div>
<div class="abs nw sc" id="sc4" style="left:958px;"><u>D48</u></div>
<div class="abs" style="left:279px;top:80px;width:701px;height:372px;overflow:hidden;">
<svg width="701" height="372" viewBox="279 80 701 372" style="position:absolute;left:0;top:0;">
<rect x="279" y="80" width="701" height="372" fill="#fdfdfb"/>
<path d="M966.0 86.0 L980.0 84.0 L980.0 196.0 L966.0 186.0 L953.5 178.0 L938.5 160.5 L931.0 153.0 L941.0 133.0 L956.0 103.0Z" fill="#dfe8d3"/>
<path d="M958.0 262.0 L980.0 258.0 L980.0 300.0 L972.0 300.0 L968.0 280.0Z" fill="#dfe8d3"/>
<path d="M455.5 76.0 C455.8 76.7 455.4 76.8 457.0 80.0 C458.6 83.2 461.2 89.5 464.9 95.5 C468.5 101.5 474.0 109.8 478.9 115.8 C483.8 121.8 488.4 126.1 494.4 131.3 C500.3 136.5 507.6 141.7 514.6 146.9 C521.6 152.1 528.1 157.5 536.4 162.4 C544.7 167.3 553.8 171.7 564.4 176.4 C575.0 181.1 591.0 186.5 600.0 190.4 C609.0 194.3 612.2 196.2 618.7 199.8 C625.2 203.4 632.2 207.5 638.9 212.2 C645.6 216.8 652.5 222.8 659.0 227.7 C665.5 232.6 672.0 237.0 677.7 241.7 C683.4 246.4 688.9 251.3 693.3 255.7 C697.7 260.1 700.9 262.3 704.0 268.0 C707.1 273.7 710.8 282.0 712.0 290.0 C713.2 298.0 713.3 305.2 711.0 316.0 C708.7 326.8 702.2 346.2 698.3 355.0 C694.4 363.8 691.9 364.1 687.5 369.0 C683.1 373.9 677.2 379.8 672.0 384.4 C666.8 389.0 662.2 392.9 656.5 396.8 C650.8 400.7 644.2 404.8 638.0 407.6 C631.8 410.4 626.1 412.2 619.4 413.8 C612.7 415.4 606.0 416.5 597.8 416.9 C589.6 417.3 578.5 416.6 570.0 416.0 C561.5 415.4 554.7 414.0 547.0 413.0 C539.3 412.0 531.7 411.4 524.0 410.0 C516.3 408.6 508.7 406.8 501.0 404.6 C493.3 402.4 485.7 399.8 478.0 397.0 C470.3 394.2 461.7 390.8 455.0 387.7 C448.3 384.6 445.3 381.7 438.0 378.5 C430.7 375.3 419.6 371.1 411.2 368.4 C402.8 365.7 395.3 364.5 387.8 362.2 C380.3 359.9 372.5 357.5 366.0 354.4 C359.5 351.3 354.4 347.6 349.0 343.5 C343.6 339.4 338.1 334.4 333.4 329.5 C328.7 324.6 324.6 318.9 321.0 314.0 C317.4 309.1 314.5 304.7 311.7 300.0 C308.9 295.3 306.9 291.0 304.0 286.0 C301.1 281.0 297.2 275.7 294.0 270.0 C290.8 264.3 287.5 257.5 285.0 252.0 C282.5 246.5 280.8 240.7 279.0 237.0 C277.2 233.3 274.8 231.2 274.0 230.0 L274.0 313.0 C274.8 314.2 276.1 316.4 279.0 320.2 C281.9 324.0 286.7 330.4 291.4 335.8 C296.1 341.2 301.6 347.5 307.0 352.9 C312.4 358.3 318.3 363.7 324.0 368.4 C329.7 373.1 335.2 377.3 341.2 380.9 C347.2 384.5 352.6 387.3 359.9 390.2 C367.1 393.1 376.1 395.1 384.7 398.0 C393.2 400.9 402.1 403.9 411.2 407.3 C420.2 410.7 431.7 415.3 439.0 418.2 C446.3 421.1 448.5 422.2 455.0 424.6 C461.5 427.0 470.3 430.2 478.0 432.3 C485.7 434.4 492.0 435.5 501.0 436.9 C510.0 438.3 520.5 439.1 532.0 440.7 C543.5 442.2 558.5 445.0 570.0 446.2 C581.5 447.4 591.9 447.8 600.9 447.8 C609.9 447.8 616.3 447.5 624.0 446.2 C631.7 444.9 640.1 442.8 647.3 440.0 C654.5 437.2 660.9 433.6 667.4 429.2 C673.9 424.8 680.6 418.7 686.0 413.8 C691.4 408.9 694.3 406.8 700.0 399.8 C705.7 392.8 713.7 381.6 720.0 372.0 C726.3 362.4 733.6 351.5 738.0 342.0 C742.4 332.5 745.1 322.7 746.5 315.0 C747.9 307.3 747.1 301.7 746.5 296.0 C745.9 290.3 744.4 285.3 743.0 281.0 C741.6 276.7 740.5 275.0 738.4 270.0 C736.3 265.0 734.0 256.8 730.6 251.0 C727.2 245.2 723.1 240.2 718.2 235.5 C713.3 230.8 706.7 226.9 701.0 223.0 C695.3 219.1 689.7 216.6 684.0 212.2 C678.3 207.8 673.1 201.4 666.9 196.6 C660.7 191.8 653.9 187.5 646.6 183.4 C639.3 179.3 631.1 175.6 623.3 171.8 C615.5 168.1 607.2 164.8 600.0 160.9 C592.8 157.0 587.2 152.8 580.0 148.4 C572.8 144.0 564.4 139.3 556.6 134.4 C548.8 129.5 540.6 123.8 533.3 118.9 C526.0 114.0 518.7 109.3 513.0 104.9 C507.3 100.5 503.0 96.6 499.0 92.4 C495.0 88.2 491.2 82.7 489.0 80.0 C486.8 77.3 486.5 76.7 486.0 76.0Z" fill="#70a9e6"/>
<g fill="#bbb3a8"><path d="M520.0 262.0 L640.0 262.0 L640.0 272.0 L626.0 276.0 L618.0 284.0 L607.0 280.0 L580.0 281.0 L550.0 275.0 L535.0 266.0Z"/><path d="M539.0 289.0 L578.0 291.0 L612.0 289.0 L618.0 296.0 L620.0 301.0 L585.0 314.0 L560.0 308.0 L545.0 300.0 L539.0 296.0Z"/><path d="M603.0 318.0 L620.0 309.0 L628.0 312.0 L641.0 352.0 L646.0 376.0 L636.0 384.0 L627.0 383.0 L618.0 372.0 L608.0 350.0Z"/><path d="M624.0 293.0 L655.0 289.0 L662.0 300.0 L664.0 318.0 L650.0 326.0 L662.0 345.0 L668.0 370.0 L660.0 385.0 L650.0 388.0 L645.0 362.0 L638.0 337.0 L630.0 312.0Z"/><path d="M585.0 325.0 L598.0 332.0 L603.0 350.0 L612.0 374.0 L600.0 380.0 L592.0 382.0 L590.0 348.0Z"/><path d="M545.0 322.0 L583.0 322.0 L587.0 343.0 L560.0 343.0 L548.0 340.0Z"/><path d="M552.0 352.0 L587.0 350.0 L589.0 380.0 L560.0 377.0 L552.0 370.0Z"/><path d="M640.0 262.0 L700.0 262.0 L700.0 268.0 L690.0 285.0 L668.0 292.0 L656.0 287.0 L640.0 275.0Z"/><path d="M560.0 222.0 L600.0 226.0 L640.0 250.0 L624.0 268.0 L600.0 262.0 L560.0 258.0Z"/></g>
<path d="M781.0 168.0 C790.6 160.5 822.7 136.3 838.5 123.0 C854.3 109.7 868.4 95.2 876.0 88.0 C883.6 80.8 882.7 81.3 884.0 80.0" fill="none" stroke="#9a9a96" stroke-width="0.7" stroke-dasharray="2.5 2"/>
<path d="M878.0 90.0 C881.3 95.8 892.3 114.7 898.0 125.0 C903.7 135.3 909.7 147.5 912.0 152.0" fill="none" stroke="#9a9a96" stroke-width="0.7" stroke-dasharray="2.5 2"/>
<path d="M795.0 158.0 C789.2 163.0 772.5 175.3 760.0 188.0 C747.5 200.7 726.7 226.3 720.0 234.0" fill="none" stroke="#9a9a96" stroke-width="0.7" stroke-dasharray="2.5 2"/>
<path d="M279.0 86.0 C280.2 88.2 284.0 95.0 286.5 99.0 C289.0 103.0 292.8 108.2 294.0 110.0" fill="none" stroke="#9a9a96" stroke-width="0.7" stroke-dasharray="2.5 2"/>
<path d="M318.0 265.0 C318.7 270.8 322.0 287.5 322.0 300.0 C322.0 312.5 320.8 324.2 318.0 340.0 C315.2 355.8 308.7 376.3 305.0 395.0 C301.3 413.7 297.5 442.5 296.0 452.0" fill="none" stroke="#9a9a96" stroke-width="0.7" stroke-dasharray="2.5 2"/>
<g fill="none" stroke-linecap="round" stroke-linejoin="round">
<g stroke="#cbc8c3" stroke-width="4.2"><path d="M340.5 78.0 C339.9 81.0 337.8 90.0 337.0 96.0 C336.2 102.0 334.8 107.9 336.0 114.0 C337.2 120.1 340.2 125.2 344.0 132.5 C347.8 139.8 354.4 150.2 359.0 157.5 C363.6 164.8 368.3 171.4 371.5 176.0 C374.7 180.6 375.2 182.7 378.0 185.0 C380.8 187.3 383.7 187.9 388.0 190.0 C392.3 192.1 401.3 196.2 404.0 197.5"/><path d="M376.0 183.0 C371.7 185.9 355.8 195.7 350.0 200.5 C344.2 205.3 342.5 210.1 341.0 212.0"/><path d="M424.0 80.0 C425.8 86.3 431.1 104.6 435.0 118.0 C438.9 131.4 443.2 147.6 447.5 160.5 C451.8 173.4 457.3 185.6 461.0 195.5 C464.7 205.4 468.1 215.9 469.5 220.0"/><path d="M447.5 160.5 C450.4 162.8 457.5 168.2 465.0 174.0 C472.5 179.8 480.8 186.1 492.5 195.5 C504.2 204.9 526.2 223.6 535.0 230.5 C543.8 237.4 541.2 237.8 545.0 237.0 C548.8 236.2 552.5 226.8 557.5 225.5 C562.5 224.2 570.6 228.7 575.0 229.0 C579.4 229.3 580.7 228.1 584.0 227.5 C587.3 226.9 589.8 225.2 595.0 225.5 C600.2 225.8 607.1 225.7 615.0 229.0 C622.9 232.3 634.2 241.5 642.5 245.5 C650.8 249.5 657.9 248.8 665.0 253.0 C672.1 257.2 679.7 265.8 685.0 271.0 C690.3 276.2 695.0 281.8 697.0 284.0"/><path d="M465.0 174.0 L454.0 182.0"/><path d="M466.0 267.0 C469.6 263.0 490.6 245.8 487.5 243.0 C484.4 240.2 456.7 248.7 447.5 250.5 C438.3 252.3 440.8 250.7 432.5 254.0 C424.2 257.3 404.2 266.6 397.5 270.5 C390.8 274.4 395.8 273.8 392.5 277.5 C389.2 281.2 380.4 286.7 377.5 292.5 C374.6 298.3 376.1 307.1 375.0 312.5 C373.9 317.9 373.1 322.8 371.0 325.0 C368.9 327.2 366.0 327.2 362.5 326.0 C359.0 324.8 355.0 320.6 350.0 317.5 C345.0 314.4 338.3 310.8 332.5 307.5 C326.7 304.2 318.9 300.8 315.0 297.5 C311.1 294.2 310.0 289.2 309.0 287.5"/><path d="M432.5 254.0 C433.8 256.8 437.1 266.7 440.0 271.0 C442.9 275.3 446.8 278.7 450.0 280.0 C453.2 281.3 456.1 281.5 459.0 279.0 C461.9 276.5 466.1 267.3 467.5 265.0"/><path d="M459.0 279.0 C461.7 282.9 469.8 297.3 475.0 302.5 C480.2 307.7 487.9 302.1 490.0 310.0 C492.1 317.9 487.1 342.3 487.5 350.0 C487.9 357.7 488.8 355.2 492.5 356.0 C496.2 356.8 504.6 356.8 510.0 355.0 C515.4 353.2 520.8 348.8 525.0 345.0 C529.2 341.2 530.8 336.7 535.0 332.5 C539.2 328.3 545.8 322.9 550.0 320.0 C554.2 317.1 558.3 315.8 560.0 315.0"/><path d="M490.0 310.0 C493.3 307.9 503.8 302.5 510.0 297.5 C516.2 292.5 523.3 283.6 527.5 280.0 C531.7 276.4 533.8 276.7 535.0 276.0"/><path d="M494.0 376.0 C495.0 377.5 496.5 382.8 500.0 385.0 C503.5 387.2 508.5 388.0 515.0 389.0 C521.5 390.0 532.4 390.2 539.0 391.0 C545.6 391.8 548.6 394.2 554.5 393.7 C560.4 393.2 566.9 389.4 574.6 388.0 C582.3 386.6 593.4 386.7 600.9 385.0 C608.4 383.3 616.3 379.2 619.4 378.0"/><path d="M532.5 347.5 C532.9 350.4 532.9 360.8 535.0 365.0 C537.1 369.2 540.0 370.2 545.0 372.5 C550.0 374.8 557.5 377.6 565.0 379.0 C572.5 380.4 582.9 380.4 590.0 381.0 C597.1 381.6 602.5 382.8 607.5 382.5 C612.5 382.2 617.9 379.6 620.0 379.0"/><path d="M595.0 225.5 L596.0 253.0"/><path d="M575.0 229.0 C574.8 232.6 576.1 246.5 574.0 250.5 C571.9 254.5 564.4 252.6 562.5 253.0"/><path d="M535.0 254.0 C539.6 253.8 552.3 253.2 562.5 253.0 C572.7 252.8 587.2 252.2 596.0 253.0 C604.8 253.8 609.8 255.0 615.0 258.0 C620.2 261.0 626.0 266.9 627.5 271.0 C629.0 275.1 624.6 280.6 624.0 282.5"/><path d="M642.5 245.5 L627.5 271.0"/><path d="M535.0 294.0 C540.4 293.5 560.2 292.3 567.5 291.0 C574.8 289.7 576.1 284.5 579.0 286.0 C581.9 287.5 583.3 296.7 585.0 300.0 C586.7 303.3 588.3 305.0 589.0 306.0"/><path d="M576.0 319.0 L622.5 301.0"/><path d="M617.5 289.0 C619.2 286.7 624.6 279.0 627.5 275.0 C630.4 271.0 632.9 268.2 635.0 265.0 C637.1 261.8 639.2 257.5 640.0 256.0"/><path d="M624.0 282.5 C629.2 282.9 646.1 285.4 655.0 285.0 C663.9 284.6 672.5 282.1 677.5 280.0 C682.5 277.9 684.2 275.0 685.0 272.5 C685.8 270.0 682.5 266.2 682.0 265.0"/><path d="M655.0 285.0 C655.8 288.8 658.5 302.1 660.0 307.5 C661.5 312.9 663.6 315.0 664.0 317.5 C664.4 320.0 667.3 320.4 662.5 322.5 C657.7 324.6 639.6 328.8 635.0 330.0"/><path d="M655.0 322.5 C655.8 325.4 658.5 336.4 660.0 340.0 C661.5 343.6 663.3 343.3 664.0 344.0"/><path d="M677.5 280.0 C679.2 282.1 686.2 287.9 687.5 292.5 C688.8 297.1 688.3 303.1 685.0 307.5 C681.7 311.9 670.4 317.1 667.5 319.0"/><path d="M540.0 347.0 C548.2 346.8 578.3 346.8 589.0 346.0 C599.7 345.2 601.5 343.1 604.0 342.5"/><path d="M589.0 346.0 C589.3 349.2 590.8 358.1 591.0 365.0 C591.2 371.9 590.2 383.8 590.0 387.5"/><path d="M595.0 411.0 C598.8 410.0 610.8 407.7 617.5 405.0 C624.2 402.3 630.4 398.8 635.0 395.0 C639.6 391.2 643.3 384.6 645.0 382.5"/><path d="M707.5 385.0 C709.6 383.3 715.6 377.3 720.0 375.0 C724.4 372.7 731.7 371.7 734.0 371.0"/><path d="M689.0 440.0 C691.7 436.7 698.2 425.4 705.0 420.0 C711.8 414.6 720.8 413.8 730.0 407.5 C739.2 401.2 751.8 390.6 760.0 382.5 C768.2 374.4 775.8 362.9 779.0 359.0"/><path d="M660.0 451.0 C664.2 449.2 678.3 444.3 685.0 440.0 C691.7 435.7 695.8 429.2 700.0 425.0 C704.2 420.8 708.3 416.7 710.0 415.0"/><path d="M770.0 265.0 C770.8 267.1 773.2 275.0 775.0 277.5 C776.8 280.0 780.0 279.6 781.0 280.0"/><path d="M775.0 271.0 C774.6 269.2 771.8 263.1 772.5 260.5 C773.2 257.9 776.9 255.1 779.0 255.5 C781.1 255.9 782.8 260.4 785.0 263.0 C787.2 265.6 790.0 267.3 792.5 271.0 C795.0 274.7 796.8 280.2 800.0 285.0 C803.2 289.8 810.0 297.5 812.0 300.0"/><path d="M892.0 80.0 C894.3 85.1 903.2 100.4 906.0 110.5 C908.8 120.6 907.0 131.1 908.5 140.5 C910.0 149.9 913.9 162.6 915.0 167.0"/><path d="M896.0 207.5 C899.3 207.6 911.0 206.2 916.0 208.0 C921.0 209.8 924.5 214.2 926.0 218.0 C927.5 221.8 929.2 226.3 925.0 230.5 C920.8 234.7 909.6 239.7 901.0 243.0 C892.4 246.3 878.1 249.2 873.5 250.5"/><path d="M940.0 207.5 L957.0 206.0"/><path d="M942.0 232.5 L958.5 231.0"/><path d="M941.0 243.0 C942.7 245.5 946.8 253.3 951.0 258.0 C955.2 262.7 962.7 267.3 966.0 271.0 C969.3 274.7 970.2 274.2 971.0 280.0 C971.8 285.8 971.0 301.7 971.0 306.0"/><path d="M870.0 253.0 C872.2 256.0 880.7 267.3 883.5 271.0 C886.3 274.7 887.4 271.8 887.0 275.0 C886.6 278.2 885.5 284.6 881.0 290.0 C876.5 295.4 863.5 304.6 860.0 307.5"/><path d="M867.0 361.0 L931.0 327.5"/><path d="M871.0 384.0 L935.0 350.0"/><path d="M868.5 401.0 C865.4 402.2 858.4 404.8 850.0 408.0 C841.6 411.2 826.3 416.0 818.0 420.0 C809.7 424.0 805.5 427.8 800.0 432.0 C794.5 436.2 788.8 441.5 785.0 445.0 C781.2 448.5 778.3 451.7 777.0 453.0"/><path d="M826.0 451.0 C831.0 449.2 848.5 442.2 856.0 440.0 C863.5 437.8 868.5 437.9 871.0 437.5"/><path d="M956.0 386.0 L980.0 384.0"/><path d="M956.0 386.0 C958.5 388.3 966.7 395.8 971.0 400.0 C975.3 404.2 980.2 409.2 982.0 411.0"/><path d="M312.5 437.5 C315.8 436.2 327.2 432.2 332.5 430.0 C337.8 427.8 342.1 425.0 344.0 424.0"/><path d="M280.0 443.0 L285.0 442.0"/><path d="M451.7 443.0 L451.7 453.0"/><path d="M750.0 263.0 C751.7 266.4 758.2 277.1 760.0 283.7 C761.8 290.3 761.2 296.3 761.0 302.5 C760.8 308.7 760.1 314.8 758.7 321.0 C757.3 327.2 754.6 333.3 752.5 340.0 C750.4 346.7 748.9 353.5 746.0 361.0 C743.1 368.5 740.2 376.8 735.0 385.0 C729.8 393.2 718.3 405.8 715.0 410.0"/><path d="M792.0 80.0 C790.8 83.0 784.7 93.0 785.0 98.0 C785.3 103.0 792.5 108.0 794.0 110.0"/><path d="M795.0 120.0 C792.8 122.5 785.3 129.5 782.0 135.0 C778.7 140.5 776.2 150.0 775.0 153.0"/><path d="M730.0 235.5 C732.1 238.0 739.6 246.3 742.5 250.5 C745.4 254.7 744.6 260.1 747.5 260.5 C750.4 260.9 755.4 254.7 760.0 253.0 C764.6 251.3 772.5 250.9 775.0 250.5"/><path d="M786.0 80.0 C785.6 82.2 781.8 87.9 783.5 93.0 C785.2 98.1 791.0 106.8 796.0 110.5 C801.0 114.2 806.4 113.4 813.5 115.5 C820.6 117.6 830.2 123.8 838.5 123.0 C846.8 122.2 856.4 113.8 863.5 110.5 C870.6 107.2 875.2 100.5 881.0 103.0 C886.8 105.5 894.3 120.1 898.5 125.5 C902.7 130.9 904.8 133.8 906.0 135.5"/><path d="M813.5 115.5 L801.0 100.5"/><path d="M813.5 115.5 C810.6 116.3 801.4 116.8 796.0 120.5 C790.6 124.2 783.5 135.1 781.0 138.0"/><path d="M906.0 135.5 C902.7 136.8 893.1 137.6 886.0 143.0 C878.9 148.4 867.2 163.8 863.5 168.0"/><path d="M868.5 223.0 C870.6 223.4 877.2 226.3 881.0 225.5 C884.8 224.7 889.3 219.2 891.0 218.0"/><path d="M290.0 78.0 C291.1 80.8 295.7 89.5 296.5 95.0 C297.3 100.5 295.2 108.3 295.0 111.0"/><path d="M308.0 78.0 C306.5 81.5 301.2 93.5 299.0 99.0 C296.8 104.5 295.0 107.9 295.0 111.0 C295.0 114.1 296.5 115.2 299.0 117.5 C301.5 119.8 306.8 121.7 310.0 125.0 C313.2 128.3 313.2 134.0 318.0 137.5 C322.8 141.0 335.5 144.6 339.0 146.0"/><path d="M367.7 106.0 C364.1 105.8 350.4 104.5 346.0 105.0 C341.6 105.5 341.8 106.5 341.0 109.0 C340.2 111.5 340.3 116.8 341.0 120.0 C341.7 123.2 342.8 126.2 345.0 128.0 C347.2 129.8 352.5 130.5 354.0 131.0"/><path d="M381.0 88.0 C381.0 93.0 376.5 113.0 381.0 118.0 C385.5 123.0 403.5 118.0 408.0 118.0"/><path d="M381.0 88.0 L408.0 86.0"/><path d="M315.0 190.0 C317.5 188.3 325.8 180.0 330.0 180.0 C334.2 180.0 337.8 184.2 340.0 190.0 C342.2 195.8 341.0 208.3 343.0 215.0 C345.0 221.7 350.5 227.5 352.0 230.0"/><path d="M350.0 250.0 C355.0 248.3 371.3 243.0 380.0 240.0 C388.7 237.0 398.3 229.0 402.0 232.0 C405.7 235.0 402.0 253.7 402.0 258.0"/><path d="M350.0 250.0 C353.7 252.0 364.5 260.0 372.0 262.0 C379.5 264.0 391.2 262.0 395.0 262.0"/><path d="M520.9 103.3 C517.1 107.8 506.6 119.9 498.0 130.0 C489.4 140.1 474.2 158.3 469.5 164.0"/><path d="M449.3 78.0 C450.6 81.7 453.4 92.9 457.0 100.0 C460.6 107.1 465.3 113.9 471.0 120.4 C476.7 126.9 485.3 133.6 491.3 139.0 C497.3 144.4 503.4 148.3 507.0 153.0 C510.6 157.7 510.7 162.8 513.0 167.0 C515.3 171.2 517.0 175.7 520.9 178.0 C524.8 180.3 533.3 179.2 536.4 181.0 C539.5 182.8 540.0 185.6 539.5 188.8 C539.0 192.0 534.3 198.1 533.3 200.0"/><path d="M595.0 200.0 C602.5 204.2 627.8 217.2 640.0 225.0 C652.2 232.8 663.3 243.3 668.0 247.0"/><path d="M362.0 327.0 C361.5 329.2 359.0 336.2 359.0 340.0 C359.0 343.8 359.3 347.3 362.0 350.0 C364.7 352.7 367.2 354.0 375.0 356.0 C382.8 358.0 401.5 360.0 409.0 362.0 C416.5 364.0 412.3 365.3 420.0 368.0 C427.7 370.7 446.3 375.5 455.0 378.0 C463.7 380.5 469.2 382.2 472.0 383.0"/><path d="M377.0 414.0 C380.0 413.0 387.0 409.0 395.0 408.0 C403.0 407.0 420.0 408.0 425.0 408.0"/><path d="M335.0 405.0 L352.0 420.0"/><path d="M279.0 405.0 C282.5 406.2 293.5 407.5 300.0 412.0 C306.5 416.5 315.0 428.7 318.0 432.0"/><path d="M279.0 430.0 L300.0 436.0"/><path d="M752.0 310.0 C755.0 308.3 763.7 302.5 770.0 300.0 C776.3 297.5 786.7 295.8 790.0 295.0"/><path d="M745.0 340.0 C749.2 336.7 762.5 324.7 770.0 320.0 C777.5 315.3 786.7 313.3 790.0 312.0"/><path d="M806.0 307.5 C810.0 311.2 821.0 326.2 830.0 330.0 C839.0 333.8 851.7 328.3 860.0 330.0 C868.3 331.7 876.7 338.3 880.0 340.0"/><path d="M830.0 330.0 C831.7 333.3 833.3 345.0 840.0 350.0 C846.7 355.0 865.0 358.3 870.0 360.0"/><path d="M787.5 375.0 C791.2 375.8 802.9 375.8 810.0 380.0 C817.1 384.2 826.7 396.7 830.0 400.0"/><path d="M800.0 345.0 C802.5 349.2 810.0 360.8 815.0 370.0 C820.0 379.2 824.2 391.7 830.0 400.0 C835.8 408.3 846.7 416.7 850.0 420.0"/><path d="M905.0 400.0 C906.7 403.3 912.5 413.3 915.0 420.0 C917.5 426.7 916.7 434.7 920.0 440.0 C923.3 445.3 932.5 450.0 935.0 452.0"/><path d="M943.5 377.5 C943.8 381.2 942.2 392.1 945.0 400.0 C947.8 407.9 956.7 416.3 960.0 425.0 C963.3 433.7 964.2 447.5 965.0 452.0"/><path d="M905.0 420.0 C909.2 418.3 923.3 413.3 930.0 410.0 C936.7 406.7 942.5 401.7 945.0 400.0"/><path d="M850.0 320.0 C853.3 320.8 864.2 325.0 870.0 325.0 C875.8 325.0 882.5 320.8 885.0 320.0"/><path d="M860.0 307.5 C863.3 309.2 872.5 311.8 880.0 318.0 C887.5 324.2 900.8 340.5 905.0 345.0"/><path d="M908.5 179.0 C911.4 180.1 921.0 181.5 926.0 185.5 C931.0 189.5 935.6 196.8 938.5 203.0 C941.4 209.2 943.1 216.3 943.5 223.0 C943.9 229.7 943.1 236.0 941.0 243.0 C938.9 250.0 934.3 258.8 931.0 265.0 C927.7 271.2 922.7 274.6 921.0 280.0 C919.3 285.4 919.3 290.4 921.0 297.5 C922.7 304.6 928.5 313.3 931.0 322.5 C933.5 331.7 933.9 343.3 936.0 352.5 C938.1 361.7 940.2 371.9 943.5 377.5 C946.8 383.1 953.9 384.6 956.0 386.0"/></g>
<g stroke="#c4bea2" stroke-width="7.4"><path d="M412.0 78.0 C412.0 90.5 412.6 135.5 412.0 153.0 C411.4 170.5 409.8 175.6 408.5 183.0 C407.2 190.4 405.2 195.1 404.5 197.5"/><path d="M404.5 197.5 C408.8 198.4 421.6 200.8 430.0 203.0 C438.4 205.2 447.9 206.8 455.0 210.5 C462.1 214.2 466.7 219.2 472.5 225.5 C478.3 231.8 483.3 241.3 490.0 248.0 C496.7 254.7 505.0 261.8 512.5 265.5 C520.0 269.2 528.8 267.8 535.0 270.0 C541.2 272.2 542.5 276.5 550.0 279.0 C557.5 281.5 570.4 284.2 580.0 285.0 C589.6 285.8 601.2 283.3 607.5 284.0 C613.8 284.7 614.2 284.7 617.5 289.0 C620.8 293.3 624.6 301.9 627.5 310.0 C630.4 318.1 632.5 329.2 635.0 337.5 C637.5 345.8 640.8 352.5 642.5 360.0 C644.2 367.5 643.3 375.0 645.0 382.5 C646.7 390.0 650.0 396.2 652.5 405.0 C655.0 413.8 657.8 427.0 660.0 435.0 C662.2 443.0 665.0 450.0 666.0 453.0"/><path d="M404.5 197.5 C401.2 200.9 392.0 211.6 385.0 218.0 C378.0 224.4 369.1 230.7 362.5 236.0 C355.9 241.3 348.4 247.7 345.6 250.0"/><path d="M275.0 172.0 C275.7 173.6 277.0 176.6 279.0 181.3 C281.0 186.0 284.4 194.6 287.0 200.0 C289.6 205.4 291.3 209.5 294.5 214.0 C297.7 218.5 301.9 223.1 306.0 227.0 C310.1 230.9 315.2 234.4 319.4 237.3 C323.6 240.2 326.6 242.4 331.0 244.5 C335.4 246.6 343.6 247.0 345.6 250.0 C347.6 253.0 344.4 257.5 343.0 262.5 C341.6 267.5 339.5 272.5 337.5 280.0 C335.5 287.5 333.9 293.3 331.0 307.5 C328.1 321.7 323.3 349.6 320.0 365.0 C316.7 380.4 312.5 394.2 311.0 400.0"/><path d="M512.5 265.5 C514.1 267.6 518.2 273.5 522.0 278.0 C525.8 282.5 531.2 288.0 535.0 292.5 C538.8 297.0 540.4 301.4 545.0 305.0 C549.6 308.6 556.7 311.7 562.5 314.0 C568.3 316.3 573.8 316.3 580.0 319.0 C586.2 321.7 595.7 324.4 600.0 330.0 C604.3 335.6 603.1 344.6 606.0 352.5 C608.9 360.4 613.9 371.7 617.5 377.5 C621.1 383.3 623.8 385.8 627.5 387.5 C631.2 389.2 637.1 388.3 640.0 387.5 C642.9 386.7 644.2 383.3 645.0 382.5"/><path d="M275.0 395.0 C279.2 395.4 294.0 396.5 300.0 397.5 C306.0 398.5 306.0 398.5 311.0 401.0 C316.0 403.5 323.5 408.1 330.0 412.5 C336.5 416.9 344.2 422.9 350.0 427.5 C355.8 432.1 359.6 436.4 365.0 440.0 C370.4 443.6 374.2 448.2 382.5 449.0 C390.8 449.8 403.8 446.1 415.0 445.0 C426.2 443.9 434.6 443.0 450.0 442.5 C465.4 442.0 495.4 441.5 507.5 442.0 C519.6 442.5 517.1 443.7 522.5 445.5 C527.9 447.3 537.1 451.8 540.0 453.0"/><path d="M311.0 401.0 C310.0 405.4 307.2 418.7 305.0 427.5 C302.8 436.3 299.2 449.6 298.0 454.0"/></g>
<g stroke="#bdb79c" stroke-width="5"><path d="M968.0 76.0 C966.0 79.7 961.3 88.9 956.0 98.0 C950.7 107.1 942.7 119.7 936.0 130.5 C929.3 141.3 921.0 154.2 916.0 163.0 C911.0 171.8 910.2 173.8 906.0 183.0 C901.8 192.2 896.4 206.8 891.0 218.0 C885.6 229.2 878.9 242.7 873.5 250.5 C868.1 258.3 865.6 258.8 858.5 265.0 C851.4 271.2 839.8 280.4 831.0 287.5 C822.2 294.6 812.7 300.4 806.0 307.5 C799.3 314.6 795.2 323.3 791.0 330.0 C786.8 336.7 783.2 343.5 781.0 347.5 C778.8 351.5 777.8 351.5 777.5 354.0 C777.2 356.5 777.3 359.0 779.0 362.5 C780.7 366.0 786.5 370.4 787.5 375.0 C788.5 379.6 789.6 383.3 785.0 390.0 C780.4 396.7 768.3 407.1 760.0 415.0 C751.7 422.9 742.0 431.0 735.0 437.5 C728.0 444.0 720.8 451.2 718.0 454.0"/></g>
<g stroke="#f7f7f4" stroke-width="2.6"><path d="M340.5 78.0 C339.9 81.0 337.8 90.0 337.0 96.0 C336.2 102.0 334.8 107.9 336.0 114.0 C337.2 120.1 340.2 125.2 344.0 132.5 C347.8 139.8 354.4 150.2 359.0 157.5 C363.6 164.8 368.3 171.4 371.5 176.0 C374.7 180.6 375.2 182.7 378.0 185.0 C380.8 187.3 383.7 187.9 388.0 190.0 C392.3 192.1 401.3 196.2 404.0 197.5"/><path d="M376.0 183.0 C371.7 185.9 355.8 195.7 350.0 200.5 C344.2 205.3 342.5 210.1 341.0 212.0"/><path d="M424.0 80.0 C425.8 86.3 431.1 104.6 435.0 118.0 C438.9 131.4 443.2 147.6 447.5 160.5 C451.8 173.4 457.3 185.6 461.0 195.5 C464.7 205.4 468.1 215.9 469.5 220.0"/><path d="M447.5 160.5 C450.4 162.8 457.5 168.2 465.0 174.0 C472.5 179.8 480.8 186.1 492.5 195.5 C504.2 204.9 526.2 223.6 535.0 230.5 C543.8 237.4 541.2 237.8 545.0 237.0 C548.8 236.2 552.5 226.8 557.5 225.5 C562.5 224.2 570.6 228.7 575.0 229.0 C579.4 229.3 580.7 228.1 584.0 227.5 C587.3 226.9 589.8 225.2 595.0 225.5 C600.2 225.8 607.1 225.7 615.0 229.0 C622.9 232.3 634.2 241.5 642.5 245.5 C650.8 249.5 657.9 248.8 665.0 253.0 C672.1 257.2 679.7 265.8 685.0 271.0 C690.3 276.2 695.0 281.8 697.0 284.0"/><path d="M465.0 174.0 L454.0 182.0"/><path d="M466.0 267.0 C469.6 263.0 490.6 245.8 487.5 243.0 C484.4 240.2 456.7 248.7 447.5 250.5 C438.3 252.3 440.8 250.7 432.5 254.0 C424.2 257.3 404.2 266.6 397.5 270.5 C390.8 274.4 395.8 273.8 392.5 277.5 C389.2 281.2 380.4 286.7 377.5 292.5 C374.6 298.3 376.1 307.1 375.0 312.5 C373.9 317.9 373.1 322.8 371.0 325.0 C368.9 327.2 366.0 327.2 362.5 326.0 C359.0 324.8 355.0 320.6 350.0 317.5 C345.0 314.4 338.3 310.8 332.5 307.5 C326.7 304.2 318.9 300.8 315.0 297.5 C311.1 294.2 310.0 289.2 309.0 287.5"/><path d="M432.5 254.0 C433.8 256.8 437.1 266.7 440.0 271.0 C442.9 275.3 446.8 278.7 450.0 280.0 C453.2 281.3 456.1 281.5 459.0 279.0 C461.9 276.5 466.1 267.3 467.5 265.0"/><path d="M459.0 279.0 C461.7 282.9 469.8 297.3 475.0 302.5 C480.2 307.7 487.9 302.1 490.0 310.0 C492.1 317.9 487.1 342.3 487.5 350.0 C487.9 357.7 488.8 355.2 492.5 356.0 C496.2 356.8 504.6 356.8 510.0 355.0 C515.4 353.2 520.8 348.8 525.0 345.0 C529.2 341.2 530.8 336.7 535.0 332.5 C539.2 328.3 545.8 322.9 550.0 320.0 C554.2 317.1 558.3 315.8 560.0 315.0"/><path d="M490.0 310.0 C493.3 307.9 503.8 302.5 510.0 297.5 C516.2 292.5 523.3 283.6 527.5 280.0 C531.7 276.4 533.8 276.7 535.0 276.0"/><path d="M494.0 376.0 C495.0 377.5 496.5 382.8 500.0 385.0 C503.5 387.2 508.5 388.0 515.0 389.0 C521.5 390.0 532.4 390.2 539.0 391.0 C545.6 391.8 548.6 394.2 554.5 393.7 C560.4 393.2 566.9 389.4 574.6 388.0 C582.3 386.6 593.4 386.7 600.9 385.0 C608.4 383.3 616.3 379.2 619.4 378.0"/><path d="M532.5 347.5 C532.9 350.4 532.9 360.8 535.0 365.0 C537.1 369.2 540.0 370.2 545.0 372.5 C550.0 374.8 557.5 377.6 565.0 379.0 C572.5 380.4 582.9 380.4 590.0 381.0 C597.1 381.6 602.5 382.8 607.5 382.5 C612.5 382.2 617.9 379.6 620.0 379.0"/><path d="M595.0 225.5 L596.0 253.0"/><path d="M575.0 229.0 C574.8 232.6 576.1 246.5 574.0 250.5 C571.9 254.5 564.4 252.6 562.5 253.0"/><path d="M535.0 254.0 C539.6 253.8 552.3 253.2 562.5 253.0 C572.7 252.8 587.2 252.2 596.0 253.0 C604.8 253.8 609.8 255.0 615.0 258.0 C620.2 261.0 626.0 266.9 627.5 271.0 C629.0 275.1 624.6 280.6 624.0 282.5"/><path d="M642.5 245.5 L627.5 271.0"/><path d="M535.0 294.0 C540.4 293.5 560.2 292.3 567.5 291.0 C574.8 289.7 576.1 284.5 579.0 286.0 C581.9 287.5 583.3 296.7 585.0 300.0 C586.7 303.3 588.3 305.0 589.0 306.0"/><path d="M576.0 319.0 L622.5 301.0"/><path d="M617.5 289.0 C619.2 286.7 624.6 279.0 627.5 275.0 C630.4 271.0 632.9 268.2 635.0 265.0 C637.1 261.8 639.2 257.5 640.0 256.0"/><path d="M624.0 282.5 C629.2 282.9 646.1 285.4 655.0 285.0 C663.9 284.6 672.5 282.1 677.5 280.0 C682.5 277.9 684.2 275.0 685.0 272.5 C685.8 270.0 682.5 266.2 682.0 265.0"/><path d="M655.0 285.0 C655.8 288.8 658.5 302.1 660.0 307.5 C661.5 312.9 663.6 315.0 664.0 317.5 C664.4 320.0 667.3 320.4 662.5 322.5 C657.7 324.6 639.6 328.8 635.0 330.0"/><path d="M655.0 322.5 C655.8 325.4 658.5 336.4 660.0 340.0 C661.5 343.6 663.3 343.3 664.0 344.0"/><path d="M677.5 280.0 C679.2 282.1 686.2 287.9 687.5 292.5 C688.8 297.1 688.3 303.1 685.0 307.5 C681.7 311.9 670.4 317.1 667.5 319.0"/><path d="M540.0 347.0 C548.2 346.8 578.3 346.8 589.0 346.0 C599.7 345.2 601.5 343.1 604.0 342.5"/><path d="M589.0 346.0 C589.3 349.2 590.8 358.1 591.0 365.0 C591.2 371.9 590.2 383.8 590.0 387.5"/><path d="M595.0 411.0 C598.8 410.0 610.8 407.7 617.5 405.0 C624.2 402.3 630.4 398.8 635.0 395.0 C639.6 391.2 643.3 384.6 645.0 382.5"/><path d="M707.5 385.0 C709.6 383.3 715.6 377.3 720.0 375.0 C724.4 372.7 731.7 371.7 734.0 371.0"/><path d="M689.0 440.0 C691.7 436.7 698.2 425.4 705.0 420.0 C711.8 414.6 720.8 413.8 730.0 407.5 C739.2 401.2 751.8 390.6 760.0 382.5 C768.2 374.4 775.8 362.9 779.0 359.0"/><path d="M660.0 451.0 C664.2 449.2 678.3 444.3 685.0 440.0 C691.7 435.7 695.8 429.2 700.0 425.0 C704.2 420.8 708.3 416.7 710.0 415.0"/><path d="M770.0 265.0 C770.8 267.1 773.2 275.0 775.0 277.5 C776.8 280.0 780.0 279.6 781.0 280.0"/><path d="M775.0 271.0 C774.6 269.2 771.8 263.1 772.5 260.5 C773.2 257.9 776.9 255.1 779.0 255.5 C781.1 255.9 782.8 260.4 785.0 263.0 C787.2 265.6 790.0 267.3 792.5 271.0 C795.0 274.7 796.8 280.2 800.0 285.0 C803.2 289.8 810.0 297.5 812.0 300.0"/><path d="M892.0 80.0 C894.3 85.1 903.2 100.4 906.0 110.5 C908.8 120.6 907.0 131.1 908.5 140.5 C910.0 149.9 913.9 162.6 915.0 167.0"/><path d="M896.0 207.5 C899.3 207.6 911.0 206.2 916.0 208.0 C921.0 209.8 924.5 214.2 926.0 218.0 C927.5 221.8 929.2 226.3 925.0 230.5 C920.8 234.7 909.6 239.7 901.0 243.0 C892.4 246.3 878.1 249.2 873.5 250.5"/><path d="M940.0 207.5 L957.0 206.0"/><path d="M942.0 232.5 L958.5 231.0"/><path d="M941.0 243.0 C942.7 245.5 946.8 253.3 951.0 258.0 C955.2 262.7 962.7 267.3 966.0 271.0 C969.3 274.7 970.2 274.2 971.0 280.0 C971.8 285.8 971.0 301.7 971.0 306.0"/><path d="M870.0 253.0 C872.2 256.0 880.7 267.3 883.5 271.0 C886.3 274.7 887.4 271.8 887.0 275.0 C886.6 278.2 885.5 284.6 881.0 290.0 C876.5 295.4 863.5 304.6 860.0 307.5"/><path d="M867.0 361.0 L931.0 327.5"/><path d="M871.0 384.0 L935.0 350.0"/><path d="M868.5 401.0 C865.4 402.2 858.4 404.8 850.0 408.0 C841.6 411.2 826.3 416.0 818.0 420.0 C809.7 424.0 805.5 427.8 800.0 432.0 C794.5 436.2 788.8 441.5 785.0 445.0 C781.2 448.5 778.3 451.7 777.0 453.0"/><path d="M826.0 451.0 C831.0 449.2 848.5 442.2 856.0 440.0 C863.5 437.8 868.5 437.9 871.0 437.5"/><path d="M956.0 386.0 L980.0 384.0"/><path d="M956.0 386.0 C958.5 388.3 966.7 395.8 971.0 400.0 C975.3 404.2 980.2 409.2 982.0 411.0"/><path d="M312.5 437.5 C315.8 436.2 327.2 432.2 332.5 430.0 C337.8 427.8 342.1 425.0 344.0 424.0"/><path d="M280.0 443.0 L285.0 442.0"/><path d="M451.7 443.0 L451.7 453.0"/><path d="M750.0 263.0 C751.7 266.4 758.2 277.1 760.0 283.7 C761.8 290.3 761.2 296.3 761.0 302.5 C760.8 308.7 760.1 314.8 758.7 321.0 C757.3 327.2 754.6 333.3 752.5 340.0 C750.4 346.7 748.9 353.5 746.0 361.0 C743.1 368.5 740.2 376.8 735.0 385.0 C729.8 393.2 718.3 405.8 715.0 410.0"/><path d="M792.0 80.0 C790.8 83.0 784.7 93.0 785.0 98.0 C785.3 103.0 792.5 108.0 794.0 110.0"/><path d="M795.0 120.0 C792.8 122.5 785.3 129.5 782.0 135.0 C778.7 140.5 776.2 150.0 775.0 153.0"/><path d="M730.0 235.5 C732.1 238.0 739.6 246.3 742.5 250.5 C745.4 254.7 744.6 260.1 747.5 260.5 C750.4 260.9 755.4 254.7 760.0 253.0 C764.6 251.3 772.5 250.9 775.0 250.5"/><path d="M786.0 80.0 C785.6 82.2 781.8 87.9 783.5 93.0 C785.2 98.1 791.0 106.8 796.0 110.5 C801.0 114.2 806.4 113.4 813.5 115.5 C820.6 117.6 830.2 123.8 838.5 123.0 C846.8 122.2 856.4 113.8 863.5 110.5 C870.6 107.2 875.2 100.5 881.0 103.0 C886.8 105.5 894.3 120.1 898.5 125.5 C902.7 130.9 904.8 133.8 906.0 135.5"/><path d="M813.5 115.5 L801.0 100.5"/><path d="M813.5 115.5 C810.6 116.3 801.4 116.8 796.0 120.5 C790.6 124.2 783.5 135.1 781.0 138.0"/><path d="M906.0 135.5 C902.7 136.8 893.1 137.6 886.0 143.0 C878.9 148.4 867.2 163.8 863.5 168.0"/><path d="M868.5 223.0 C870.6 223.4 877.2 226.3 881.0 225.5 C884.8 224.7 889.3 219.2 891.0 218.0"/><path d="M290.0 78.0 C291.1 80.8 295.7 89.5 296.5 95.0 C297.3 100.5 295.2 108.3 295.0 111.0"/><path d="M308.0 78.0 C306.5 81.5 301.2 93.5 299.0 99.0 C296.8 104.5 295.0 107.9 295.0 111.0 C295.0 114.1 296.5 115.2 299.0 117.5 C301.5 119.8 306.8 121.7 310.0 125.0 C313.2 128.3 313.2 134.0 318.0 137.5 C322.8 141.0 335.5 144.6 339.0 146.0"/><path d="M367.7 106.0 C364.1 105.8 350.4 104.5 346.0 105.0 C341.6 105.5 341.8 106.5 341.0 109.0 C340.2 111.5 340.3 116.8 341.0 120.0 C341.7 123.2 342.8 126.2 345.0 128.0 C347.2 129.8 352.5 130.5 354.0 131.0"/><path d="M381.0 88.0 C381.0 93.0 376.5 113.0 381.0 118.0 C385.5 123.0 403.5 118.0 408.0 118.0"/><path d="M381.0 88.0 L408.0 86.0"/><path d="M315.0 190.0 C317.5 188.3 325.8 180.0 330.0 180.0 C334.2 180.0 337.8 184.2 340.0 190.0 C342.2 195.8 341.0 208.3 343.0 215.0 C345.0 221.7 350.5 227.5 352.0 230.0"/><path d="M350.0 250.0 C355.0 248.3 371.3 243.0 380.0 240.0 C388.7 237.0 398.3 229.0 402.0 232.0 C405.7 235.0 402.0 253.7 402.0 258.0"/><path d="M350.0 250.0 C353.7 252.0 364.5 260.0 372.0 262.0 C379.5 264.0 391.2 262.0 395.0 262.0"/><path d="M520.9 103.3 C517.1 107.8 506.6 119.9 498.0 130.0 C489.4 140.1 474.2 158.3 469.5 164.0"/><path d="M449.3 78.0 C450.6 81.7 453.4 92.9 457.0 100.0 C460.6 107.1 465.3 113.9 471.0 120.4 C476.7 126.9 485.3 133.6 491.3 139.0 C497.3 144.4 503.4 148.3 507.0 153.0 C510.6 157.7 510.7 162.8 513.0 167.0 C515.3 171.2 517.0 175.7 520.9 178.0 C524.8 180.3 533.3 179.2 536.4 181.0 C539.5 182.8 540.0 185.6 539.5 188.8 C539.0 192.0 534.3 198.1 533.3 200.0"/><path d="M595.0 200.0 C602.5 204.2 627.8 217.2 640.0 225.0 C652.2 232.8 663.3 243.3 668.0 247.0"/><path d="M362.0 327.0 C361.5 329.2 359.0 336.2 359.0 340.0 C359.0 343.8 359.3 347.3 362.0 350.0 C364.7 352.7 367.2 354.0 375.0 356.0 C382.8 358.0 401.5 360.0 409.0 362.0 C416.5 364.0 412.3 365.3 420.0 368.0 C427.7 370.7 446.3 375.5 455.0 378.0 C463.7 380.5 469.2 382.2 472.0 383.0"/><path d="M377.0 414.0 C380.0 413.0 387.0 409.0 395.0 408.0 C403.0 407.0 420.0 408.0 425.0 408.0"/><path d="M335.0 405.0 L352.0 420.0"/><path d="M279.0 405.0 C282.5 406.2 293.5 407.5 300.0 412.0 C306.5 416.5 315.0 428.7 318.0 432.0"/><path d="M279.0 430.0 L300.0 436.0"/><path d="M752.0 310.0 C755.0 308.3 763.7 302.5 770.0 300.0 C776.3 297.5 786.7 295.8 790.0 295.0"/><path d="M745.0 340.0 C749.2 336.7 762.5 324.7 770.0 320.0 C777.5 315.3 786.7 313.3 790.0 312.0"/><path d="M806.0 307.5 C810.0 311.2 821.0 326.2 830.0 330.0 C839.0 333.8 851.7 328.3 860.0 330.0 C868.3 331.7 876.7 338.3 880.0 340.0"/><path d="M830.0 330.0 C831.7 333.3 833.3 345.0 840.0 350.0 C846.7 355.0 865.0 358.3 870.0 360.0"/><path d="M787.5 375.0 C791.2 375.8 802.9 375.8 810.0 380.0 C817.1 384.2 826.7 396.7 830.0 400.0"/><path d="M800.0 345.0 C802.5 349.2 810.0 360.8 815.0 370.0 C820.0 379.2 824.2 391.7 830.0 400.0 C835.8 408.3 846.7 416.7 850.0 420.0"/><path d="M905.0 400.0 C906.7 403.3 912.5 413.3 915.0 420.0 C917.5 426.7 916.7 434.7 920.0 440.0 C923.3 445.3 932.5 450.0 935.0 452.0"/><path d="M943.5 377.5 C943.8 381.2 942.2 392.1 945.0 400.0 C947.8 407.9 956.7 416.3 960.0 425.0 C963.3 433.7 964.2 447.5 965.0 452.0"/><path d="M905.0 420.0 C909.2 418.3 923.3 413.3 930.0 410.0 C936.7 406.7 942.5 401.7 945.0 400.0"/><path d="M850.0 320.0 C853.3 320.8 864.2 325.0 870.0 325.0 C875.8 325.0 882.5 320.8 885.0 320.0"/><path d="M860.0 307.5 C863.3 309.2 872.5 311.8 880.0 318.0 C887.5 324.2 900.8 340.5 905.0 345.0"/><path d="M908.5 179.0 C911.4 180.1 921.0 181.5 926.0 185.5 C931.0 189.5 935.6 196.8 938.5 203.0 C941.4 209.2 943.1 216.3 943.5 223.0 C943.9 229.7 943.1 236.0 941.0 243.0 C938.9 250.0 934.3 258.8 931.0 265.0 C927.7 271.2 922.7 274.6 921.0 280.0 C919.3 285.4 919.3 290.4 921.0 297.5 C922.7 304.6 928.5 313.3 931.0 322.5 C933.5 331.7 933.9 343.3 936.0 352.5 C938.1 361.7 940.2 371.9 943.5 377.5 C946.8 383.1 953.9 384.6 956.0 386.0"/></g>
<g stroke="#f6e882" stroke-width="6"><path d="M412.0 78.0 C412.0 90.5 412.6 135.5 412.0 153.0 C411.4 170.5 409.8 175.6 408.5 183.0 C407.2 190.4 405.2 195.1 404.5 197.5"/><path d="M404.5 197.5 C408.8 198.4 421.6 200.8 430.0 203.0 C438.4 205.2 447.9 206.8 455.0 210.5 C462.1 214.2 466.7 219.2 472.5 225.5 C478.3 231.8 483.3 241.3 490.0 248.0 C496.7 254.7 505.0 261.8 512.5 265.5 C520.0 269.2 528.8 267.8 535.0 270.0 C541.2 272.2 542.5 276.5 550.0 279.0 C557.5 281.5 570.4 284.2 580.0 285.0 C589.6 285.8 601.2 283.3 607.5 284.0 C613.8 284.7 614.2 284.7 617.5 289.0 C620.8 293.3 624.6 301.9 627.5 310.0 C630.4 318.1 632.5 329.2 635.0 337.5 C637.5 345.8 640.8 352.5 642.5 360.0 C644.2 367.5 643.3 375.0 645.0 382.5 C646.7 390.0 650.0 396.2 652.5 405.0 C655.0 413.8 657.8 427.0 660.0 435.0 C662.2 443.0 665.0 450.0 666.0 453.0"/><path d="M404.5 197.5 C401.2 200.9 392.0 211.6 385.0 218.0 C378.0 224.4 369.1 230.7 362.5 236.0 C355.9 241.3 348.4 247.7 345.6 250.0"/><path d="M275.0 172.0 C275.7 173.6 277.0 176.6 279.0 181.3 C281.0 186.0 284.4 194.6 287.0 200.0 C289.6 205.4 291.3 209.5 294.5 214.0 C297.7 218.5 301.9 223.1 306.0 227.0 C310.1 230.9 315.2 234.4 319.4 237.3 C323.6 240.2 326.6 242.4 331.0 244.5 C335.4 246.6 343.6 247.0 345.6 250.0 C347.6 253.0 344.4 257.5 343.0 262.5 C341.6 267.5 339.5 272.5 337.5 280.0 C335.5 287.5 333.9 293.3 331.0 307.5 C328.1 321.7 323.3 349.6 320.0 365.0 C316.7 380.4 312.5 394.2 311.0 400.0"/><path d="M512.5 265.5 C514.1 267.6 518.2 273.5 522.0 278.0 C525.8 282.5 531.2 288.0 535.0 292.5 C538.8 297.0 540.4 301.4 545.0 305.0 C549.6 308.6 556.7 311.7 562.5 314.0 C568.3 316.3 573.8 316.3 580.0 319.0 C586.2 321.7 595.7 324.4 600.0 330.0 C604.3 335.6 603.1 344.6 606.0 352.5 C608.9 360.4 613.9 371.7 617.5 377.5 C621.1 383.3 623.8 385.8 627.5 387.5 C631.2 389.2 637.1 388.3 640.0 387.5 C642.9 386.7 644.2 383.3 645.0 382.5"/><path d="M275.0 395.0 C279.2 395.4 294.0 396.5 300.0 397.5 C306.0 398.5 306.0 398.5 311.0 401.0 C316.0 403.5 323.5 408.1 330.0 412.5 C336.5 416.9 344.2 422.9 350.0 427.5 C355.8 432.1 359.6 436.4 365.0 440.0 C370.4 443.6 374.2 448.2 382.5 449.0 C390.8 449.8 403.8 446.1 415.0 445.0 C426.2 443.9 434.6 443.0 450.0 442.5 C465.4 442.0 495.4 441.5 507.5 442.0 C519.6 442.5 517.1 443.7 522.5 445.5 C527.9 447.3 537.1 451.8 540.0 453.0"/><path d="M311.0 401.0 C310.0 405.4 307.2 418.7 305.0 427.5 C302.8 436.3 299.2 449.6 298.0 454.0"/></g>
<g stroke="#f7ea90" stroke-width="3.6"><path d="M968.0 76.0 C966.0 79.7 961.3 88.9 956.0 98.0 C950.7 107.1 942.7 119.7 936.0 130.5 C929.3 141.3 921.0 154.2 916.0 163.0 C911.0 171.8 910.2 173.8 906.0 183.0 C901.8 192.2 896.4 206.8 891.0 218.0 C885.6 229.2 878.9 242.7 873.5 250.5 C868.1 258.3 865.6 258.8 858.5 265.0 C851.4 271.2 839.8 280.4 831.0 287.5 C822.2 294.6 812.7 300.4 806.0 307.5 C799.3 314.6 795.2 323.3 791.0 330.0 C786.8 336.7 783.2 343.5 781.0 347.5 C778.8 351.5 777.8 351.5 777.5 354.0 C777.2 356.5 777.3 359.0 779.0 362.5 C780.7 366.0 786.5 370.4 787.5 375.0 C788.5 379.6 789.6 383.3 785.0 390.0 C780.4 396.7 768.3 407.1 760.0 415.0 C751.7 422.9 742.0 431.0 735.0 437.5 C728.0 444.0 720.8 451.2 718.0 454.0"/></g>
</g>
<g fill="#b9b1a6" stroke="#d2cdc6" stroke-width="0.6"><path d="M385.0 90.5 L404.0 90.5 L404.0 115.5 L385.0 115.5Z"/><path d="M360.0 122.5 L377.5 122.5 L377.5 153.0 L360.0 153.0Z"/><path d="M377.5 128.0 L405.0 128.0 L405.0 137.0 L377.5 137.0Z"/><path d="M377.5 140.0 L400.0 140.0 L400.0 147.0 L377.5 147.0Z"/><path d="M385.0 149.0 L405.0 149.0 L405.0 156.0 L385.0 156.0Z"/><path d="M386.0 168.0 L402.5 168.0 L402.5 180.5 L386.0 180.5Z"/><path d="M421.0 128.0 L430.0 128.0 L430.0 158.0 L421.0 158.0Z"/><path d="M415.0 120.5 L421.0 120.5 L421.0 127.0 L415.0 127.0Z"/><path d="M416.0 94.0 L422.5 94.0 L422.5 102.0 L416.0 102.0Z"/><path d="M416.0 104.0 L422.5 104.0 L422.5 113.0 L416.0 113.0Z"/><path d="M425.0 157.0 L434.0 157.0 L437.5 165.0 L437.5 178.0 L428.0 178.0 L428.0 168.0 L425.0 168.0Z"/><path d="M453.0 125.8 L461.4 128.8 L458.0 138.2 L449.6 135.2Z"/><path d="M450.6 142.8 L471.1 157.1 L466.8 163.2 L446.3 148.9Z"/><path d="M466.0 153.2 L478.3 144.6 L484.0 152.8 L471.7 161.4Z"/><path d="M481.6 156.5 L498.0 168.0 L493.4 174.5 L477.0 163.0Z"/><path d="M496.5 169.9 L503.1 174.5 L498.5 181.1 L491.9 176.5Z"/><path d="M507.6 176.7 L528.1 191.1 L522.4 199.3 L501.9 184.9Z"/><path d="M303.3 158.6 L312.4 154.4 L321.7 174.4 L312.6 178.6Z"/><path d="M283.0 161.0 L288.5 161.0 L288.5 166.5 L283.0 166.5Z"/><path d="M325.0 182.3 L333.8 183.8 L332.4 191.7 L323.6 190.2Z"/><path d="M349.0 82.0 L356.0 82.0 L356.0 89.0 L349.0 89.0Z"/><path d="M372.0 199.1 L385.9 189.4 L394.0 200.9 L380.1 210.6Z"/><path d="M348.4 213.0 L364.7 201.5 L375.6 217.0 L359.3 228.5Z"/><path d="M319.0 214.0 L332.0 214.0 L332.0 221.0 L326.0 221.0 L326.0 228.0 L319.0 228.0Z"/><path d="M402.5 214.0 L450.0 214.0 L467.5 233.0 L467.5 253.0 L402.5 253.0Z"/><path d="M382.5 226.0 L391.0 220.5 L397.5 220.5 L397.5 240.5 L388.0 240.5 L388.0 234.0 L382.5 234.0Z"/><path d="M470.2 194.4 L476.3 197.9 L471.8 205.6 L465.7 202.1Z"/><path d="M476.5 207.5 L483.5 211.5 L479.5 218.5 L472.5 214.5Z"/><path d="M290.4 245.1 L298.0 240.3 L309.6 258.9 L302.0 263.7Z"/><path d="M281.4 258.3 L286.6 255.3 L292.6 265.7 L287.4 268.7Z"/><path d="M493.3 195.4 L511.3 208.0 L506.7 214.6 L488.7 202.0Z"/><path d="M514.9 211.6 L529.7 221.9 L525.1 228.4 L510.3 218.1Z"/><path d="M478.2 233.9 L486.4 239.6 L481.8 246.1 L473.6 240.4Z"/><path d="M496.8 247.3 L508.3 255.3 L503.2 262.7 L491.7 254.7Z"/><path d="M535.0 196.0 L546.0 188.0 L556.0 200.0 L562.0 196.0 L574.0 212.0 L560.0 222.0 L553.0 214.0 L545.0 220.0 L551.0 228.0 L540.0 235.0 L535.0 228.0Z"/><path d="M776.0 232.0 L782.0 232.0 L782.0 238.0 L776.0 238.0Z"/><path d="M781.3 147.3 L784.7 149.3 L782.7 152.7 L779.3 150.7Z"/><path d="M774.5 152.5 L777.5 152.5 L777.5 155.5 L774.5 155.5Z"/><path d="M350.0 269.0 L380.0 269.0 L380.0 280.0 L368.0 287.5 L350.0 287.5Z"/><path d="M414.0 284.0 L425.0 284.0 L445.0 330.0 L435.0 335.0Z"/><path d="M377.5 414.0 L415.0 414.0 L415.0 437.0 L404.0 437.0 L404.0 424.0 L390.0 424.0 L390.0 437.0 L377.5 437.0Z"/><path d="M335.0 405.0 L352.5 405.0 L352.5 420.0 L335.0 420.0Z"/><path d="M405.6 276.9 L413.1 279.6 L410.4 287.1 L402.9 284.4Z"/><path d="M380.6 318.2 L388.4 322.7 L385.4 327.8 L377.6 323.3Z"/><path d="M429.1 359.8 L435.4 362.8 L432.9 368.2 L426.6 365.2Z"/><path d="M442.3 362.5 L447.8 365.0 L445.7 369.5 L440.2 367.0Z"/><path d="M449.1 366.3 L456.6 369.0 L454.9 373.7 L447.4 371.0Z"/><path d="M466.3 280.0 L473.2 284.0 L469.7 290.0 L462.8 286.0Z"/><path d="M444.1 284.3 L451.9 288.8 L447.9 295.7 L440.1 291.2Z"/><path d="M438.5 270.7 L444.5 274.2 L441.5 279.3 L435.5 275.8Z"/><path d="M475.7 346.0 L482.3 348.4 L480.3 354.0 L473.7 351.6Z"/><path d="M468.5 332.8 L473.2 334.5 L471.5 339.2 L466.8 337.5Z"/><path d="M480.2 364.2 L485.8 366.2 L483.8 371.8 L478.2 369.8Z"/><path d="M497.7 357.5 L509.5 359.6 L508.3 366.5 L496.5 364.4Z"/><path d="M484.8 332.4 L498.3 336.0 L495.2 347.6 L481.7 344.0Z"/><path d="M340.0 444.0 L350.0 444.0 L350.0 452.0 L340.0 452.0Z"/><path d="M325.0 444.5 L335.0 444.5 L335.0 451.5 L325.0 451.5Z"/><path d="M296.0 417.0 L304.0 417.0 L304.0 423.0 L296.0 423.0Z"/><path d="M341.3 433.5 L350.7 436.9 L348.7 442.5 L339.3 439.1Z"/><path d="M435.0 446.0 L445.0 446.0 L445.0 452.0 L435.0 452.0Z"/><path d="M418.0 446.5 L426.0 446.5 L426.0 451.5 L418.0 451.5Z"/><path d="M610.8 295.4 L638.8 376.7 L633.2 378.6 L605.2 297.3Z"/><path d="M619.8 292.4 L647.8 373.7 L642.2 375.6 L614.2 294.3Z"/><path d="M640.9 290.6 L665.6 366.7 L657.1 369.4 L632.4 293.3Z"/><path d="M656.1 303.3 L671.6 350.8 L665.9 352.7 L650.4 305.2Z"/><path d="M555.3 291.3 L579.8 300.2 L576.7 308.7 L552.2 299.8Z"/><path d="M574.7 293.3 L604.6 290.7 L605.3 298.7 L575.4 301.3Z"/><path d="M545.5 284.6 L561.8 292.2 L558.5 299.4 L542.2 291.8Z"/><path d="M537.6 279.1 L553.3 281.9 L552.4 286.9 L536.7 284.1Z"/><path d="M552.8 268.3 L592.4 273.8 L591.2 281.7 L551.6 276.2Z"/><path d="M590.0 270.5 L610.0 270.5 L610.0 277.5 L590.0 277.5Z"/><path d="M549.7 321.8 L578.7 329.5 L576.3 338.2 L547.3 330.5Z"/><path d="M565.4 349.2 L587.0 353.0 L584.6 366.8 L563.0 363.0Z"/><path d="M591.8 348.7 L600.5 346.3 L608.2 375.3 L599.5 377.7Z"/><path d="M549.0 355.7 L564.7 358.5 L563.0 368.3 L547.3 365.5Z"/><path d="M543.0 328.0 L553.0 328.0 L553.0 336.0 L543.0 336.0Z"/><path d="M540.3 379.8 L580.1 383.3 L579.7 388.2 L539.9 384.7Z"/><path d="M596.7 392.3 L622.3 387.8 L623.3 393.7 L597.7 398.2Z"/><path d="M560.3 393.2 L590.2 395.8 L589.7 400.8 L559.8 398.2Z"/><path d="M621.4 368.8 L634.5 364.0 L638.6 375.2 L625.5 380.0Z"/><path d="M632.0 278.0 L648.0 278.0 L648.0 288.0 L632.0 288.0Z"/><path d="M663.8 281.0 L677.0 285.8 L672.2 299.0 L659.0 294.2Z"/><path d="M668.5 301.3 L678.3 303.0 L675.5 318.7 L665.7 317.0Z"/><path d="M686.0 295.0 L694.0 295.0 L694.0 305.0 L686.0 305.0Z"/><path d="M655.6 293.5 L657.7 301.3 L638.4 306.5 L636.3 298.7Z"/><path d="M670.3 337.1 L683.0 343.0 L673.7 362.9 L661.0 357.0Z"/><path d="M661.2 363.4 L669.8 368.4 L662.8 380.6 L654.2 375.6Z"/><path d="M682.0 328.9 L689.5 331.7 L686.0 341.1 L678.5 338.3Z"/><path d="M644.0 264.0 L656.0 264.0 L656.0 272.0 L644.0 272.0Z"/><path d="M664.0 264.0 L672.0 264.0 L672.0 272.0 L664.0 272.0Z"/><path d="M592.8 236.7 L611.0 245.1 L607.2 253.3 L589.0 244.9Z"/><path d="M616.8 255.5 L627.2 261.5 L623.2 268.5 L612.8 262.5Z"/><path d="M579.0 233.0 L591.0 233.0 L591.0 247.0 L579.0 247.0Z"/><path d="M607.6 231.6 L614.9 235.0 L612.4 240.4 L605.1 237.0Z"/><path d="M561.0 234.0 L571.0 234.0 L571.0 246.0 L561.0 246.0Z"/><path d="M539.0 245.0 L557.0 245.0 L557.0 251.0 L539.0 251.0Z"/><path d="M510.0 296.0 L520.0 296.0 L520.0 304.0 L510.0 304.0Z"/><path d="M516.2 314.6 L531.2 320.0 L527.8 329.4 L512.8 324.0Z"/><path d="M499.0 325.0 L511.0 325.0 L511.0 335.0 L499.0 335.0Z"/><path d="M536.0 301.0 L544.0 301.0 L544.0 309.0 L536.0 309.0Z"/><path d="M523.0 335.0 L533.0 335.0 L533.0 345.0 L523.0 345.0Z"/><path d="M510.0 368.0 L520.0 368.0 L520.0 376.0 L510.0 376.0Z"/><path d="M536.3 391.7 L554.2 393.3 L553.7 398.3 L535.8 396.7Z"/><path d="M490.0 274.0 L503.0 272.0 L512.0 280.0 L512.0 288.0 L503.0 288.0 L503.0 282.0 L490.0 284.0Z"/><path d="M512.1 261.9 L524.8 267.8 L521.9 274.1 L509.2 268.2Z"/><path d="M530.8 279.9 L576.3 287.1 L575.2 294.1 L529.7 286.9Z"/><path d="M538.4 292.8 L578.2 296.3 L577.6 303.2 L537.8 299.7Z"/><path d="M584.8 289.2 L610.7 287.8 L611.2 296.8 L585.3 298.2Z"/><path d="M546.7 320.9 L568.2 325.4 L565.3 339.1 L543.8 334.6Z"/><path d="M564.8 338.6 L586.6 341.6 L583.2 365.4 L561.4 362.4Z"/><path d="M585.3 333.2 L595.6 329.4 L610.7 370.8 L600.4 374.6Z"/><path d="M603.3 309.7 L625.8 317.9 L622.7 326.3 L600.2 318.1Z"/><path d="M616.4 323.7 L628.7 319.5 L647.6 374.3 L635.3 378.5Z"/><path d="M610.5 329.2 L615.2 327.5 L631.5 374.8 L626.8 376.5Z"/><path d="M627.5 292.8 L650.7 286.5 L660.5 323.2 L637.3 329.5Z"/><path d="M656.4 339.8 L676.3 349.1 L663.6 376.2 L643.7 366.9Z"/><path d="M662.3 286.3 L683.9 290.1 L679.7 313.7 L658.1 309.9Z"/><path d="M620.3 261.8 L690.2 264.2 L689.7 278.2 L619.8 275.8Z"/><path d="M494.4 358.6 L514.4 360.4 L513.6 369.4 L493.6 367.6Z"/><path d="M512.0 351.5 L532.0 351.5 L532.0 362.5 L512.0 362.5Z"/><path d="M536.4 366.1 L556.3 367.9 L555.6 375.9 L535.7 374.1Z"/><path d="M565.0 363.0 L585.0 363.0 L585.0 371.0 L565.0 371.0Z"/><path d="M510.4 381.4 L570.1 386.6 L569.6 392.6 L509.9 387.4Z"/><path d="M594.1 390.1 L617.6 385.1 L619.9 395.9 L596.4 400.9Z"/><path d="M629.7 393.0 L642.2 389.6 L646.3 405.0 L633.8 408.4Z"/><path d="M527.1 311.1 L537.4 317.1 L532.9 324.9 L522.6 318.9Z"/><path d="M533.0 340.0 L541.0 340.0 L541.0 350.0 L533.0 350.0Z"/><path d="M579.3 306.3 L592.8 309.9 L590.7 317.7 L577.2 314.1Z"/><path d="M515.5 295.5 L524.5 295.5 L524.5 304.5 L515.5 304.5Z"/><path d="M425.0 265.0 L450.0 265.0 L441.5 279.0 L433.0 271.0Z"/><path d="M440.8 278.0 L449.0 283.8 L443.2 292.0 L435.0 286.2Z"/><path d="M452.2 285.9 L455.5 288.2 L453.2 291.5 L449.9 289.2Z"/><path d="M445.4 292.0 L450.6 295.0 L446.6 302.0 L441.4 299.0Z"/><path d="M460.8 289.1 L467.7 293.1 L463.2 300.9 L456.3 296.9Z"/><path d="M466.0 284.6 L481.4 277.4 L484.0 282.8 L468.6 290.0Z"/><path d="M469.0 265.0 L490.0 265.0 L490.0 274.0 L469.0 274.0Z"/><path d="M476.5 295.0 L485.0 287.5 L497.0 290.0 L501.5 297.0 L497.0 305.0 L478.0 303.0Z"/><path d="M508.0 279.7 L515.7 286.1 L511.2 291.5 L503.5 285.1Z"/><path d="M495.1 270.6 L515.1 261.3 L518.9 269.4 L498.9 278.7Z"/><path d="M497.6 326.5 L520.8 332.8 L518.4 341.5 L495.2 335.2Z"/><path d="M467.5 346.8 L472.2 348.5 L470.5 353.2 L465.8 351.5Z"/><path d="M731.7 371.1 L771.7 336.3 L778.3 343.9 L738.3 378.7Z"/><path d="M713.8 398.8 L741.0 375.2 L746.2 381.2 L719.0 404.8Z"/><path d="M767.5 293.7 L775.0 290.9 L778.5 300.3 L771.0 303.1Z"/><path d="M786.0 288.0 L794.0 288.0 L794.0 296.0 L786.0 296.0Z"/><path d="M758.7 317.0 L767.3 312.0 L771.3 319.0 L762.7 324.0Z"/><path d="M803.0 392.0 L809.0 392.0 L809.0 400.0 L803.0 400.0Z"/><path d="M753.4 361.4 L763.8 322.8 L770.6 324.6 L760.2 363.2Z"/><path d="M760.0 266.2 L766.8 264.4 L772.0 283.8 L765.2 285.6Z"/><path d="M777.1 267.7 L784.9 263.2 L795.9 282.3 L788.1 286.8Z"/><path d="M811.3 265.8 L826.6 278.6 L822.7 283.2 L807.4 270.4Z"/><path d="M773.4 293.2 L780.3 298.9 L774.6 305.8 L767.7 300.1Z"/><path d="M788.1 294.5 L793.1 294.5 L793.1 299.5 L788.1 299.5Z"/><path d="M795.4 291.0 L800.6 288.0 L804.6 295.0 L799.4 298.0Z"/><path d="M817.9 344.0 L830.1 337.0 L834.1 344.0 L821.9 351.0Z"/><path d="M774.2 373.7 L781.4 373.7 L781.4 385.3 L774.2 385.3Z"/><path d="M764.1 385.3 L769.9 385.3 L769.9 396.8 L764.1 396.8Z"/><path d="M752.6 396.1 L758.4 396.1 L758.4 407.6 L752.6 407.6Z"/><path d="M741.1 407.6 L746.8 407.6 L746.8 419.1 L741.1 419.1Z"/><path d="M727.4 419.1 L733.1 419.1 L733.1 430.6 L727.4 430.6Z"/><path d="M720.2 424.2 L723.1 424.2 L723.1 430.6 L720.2 430.6Z"/><path d="M718.0 433.5 L723.8 433.5 L723.8 445.1 L718.0 445.1Z"/><path d="M707.2 441.5 L713.0 441.5 L713.0 447.2 L707.2 447.2Z"/><path d="M782.1 393.9 L788.6 393.9 L788.6 405.4 L782.1 405.4Z"/><path d="M770.6 405.4 L777.1 405.4 L777.1 417.0 L770.6 417.0Z"/><path d="M759.8 417.7 L764.8 417.7 L764.8 427.8 L759.8 427.8Z"/><path d="M747.6 428.5 L753.3 428.5 L753.3 439.3 L747.6 439.3Z"/><path d="M733.1 440.0 L739.6 440.0 L739.6 451.5 L733.1 451.5Z"/><path d="M749.0 441.5 L751.9 441.5 L751.9 448.7 L749.0 448.7Z"/><path d="M765.6 437.1 L772.0 437.1 L772.0 447.2 L765.6 447.2Z"/><path d="M777.8 426.3 L783.6 426.3 L783.6 437.9 L777.8 437.9Z"/><path d="M759.8 429.9 L775.6 429.9 L775.6 435.0 L759.8 435.0Z"/><path d="M780.0 417.0 L782.9 417.0 L782.9 422.7 L780.0 422.7Z"/><path d="M788.6 414.1 L793.7 414.1 L793.7 425.6 L788.6 425.6Z"/><path d="M816.3 428.4 L821.8 425.9 L824.3 431.4 L818.8 433.9Z"/><path d="M824.2 425.5 L829.7 423.0 L832.2 428.5 L826.7 431.0Z"/><path d="M831.4 421.2 L836.9 418.7 L839.4 424.2 L833.9 426.7Z"/><path d="M840.1 418.3 L845.6 415.8 L848.1 421.3 L842.6 423.8Z"/><path d="M805.5 433.5 L811.0 431.0 L813.5 436.5 L808.0 439.0Z"/><path d="M737.3 381.5 L752.7 368.5 L757.9 374.7 L742.5 387.7Z"/><path d="M719.0 388.5 L730.0 379.3 L735.8 386.3 L724.8 395.5Z"/><path d="M713.6 399.3 L719.2 394.7 L722.4 398.5 L716.8 403.1Z"/><path d="M702.3 399.7 L708.9 394.2 L712.1 398.1 L705.5 403.6Z"/><path d="M746.7 370.2 L756.7 361.8 L761.3 367.2 L751.3 375.6Z"/><path d="M842.2 289.9 L879.5 262.8 L884.8 270.1 L847.5 297.2Z"/><path d="M801.0 321.3 L838.3 294.2 L843.0 300.7 L805.7 327.8Z"/><path d="M778.0 356.0 L803.6 336.8 L809.0 344.0 L783.4 363.2Z"/><path d="M820.2 344.6 L852.1 391.8 L843.8 397.4 L811.9 350.2Z"/><path d="M851.1 319.0 L885.0 294.3 L890.3 301.6 L856.4 326.3Z"/><path d="M879.5 302.9 L887.6 297.0 L896.5 309.1 L888.4 315.0Z"/><path d="M783.6 282.7 L791.7 276.8 L796.4 283.3 L788.3 289.2Z"/><path d="M794.3 271.8 L801.6 266.5 L805.7 272.2 L798.4 277.5Z"/><path d="M906.4 268.6 L913.4 269.6 L910.6 289.4 L903.6 288.4Z"/><path d="M908.2 292.8 L916.1 291.4 L918.8 307.2 L910.9 308.6Z"/><path d="M913.7 306.9 L920.6 305.4 L923.5 319.1 L916.6 320.6Z"/><path d="M959.5 278.1 L965.5 278.1 L965.5 295.1 L959.5 295.1Z"/><path d="M974.0 290.0 L980.0 290.0 L980.0 296.0 L974.0 296.0Z"/><path d="M974.0 303.0 L980.0 303.0 L980.0 309.0 L974.0 309.0Z"/><path d="M963.0 387.5 L973.0 387.5 L973.0 396.5 L963.0 396.5Z"/><path d="M956.7 406.0 L964.1 400.9 L973.3 414.0 L965.9 419.1Z"/><path d="M968.0 425.9 L975.0 421.9 L982.0 434.1 L975.0 438.1Z"/><path d="M922.9 167.8 L929.1 167.8 L929.1 174.2 L922.9 174.2Z"/><path d="M928.9 177.3 L935.1 177.3 L935.1 183.7 L928.9 183.7Z"/><path d="M912.9 184.8 L919.1 184.8 L919.1 191.2 L912.9 191.2Z"/><path d="M935.4 185.8 L941.6 185.8 L941.6 192.2 L935.4 192.2Z"/><path d="M947.9 197.3 L954.1 197.3 L954.1 203.7 L947.9 203.7Z"/><path d="M958.9 197.3 L965.1 197.3 L965.1 203.7 L958.9 203.7Z"/><path d="M902.9 210.8 L909.1 210.8 L909.1 217.2 L902.9 217.2Z"/><path d="M913.9 210.8 L920.1 210.8 L920.1 217.2 L913.9 217.2Z"/><path d="M928.9 204.8 L935.1 204.8 L935.1 211.2 L928.9 211.2Z"/><path d="M948.9 209.8 L955.1 209.8 L955.1 216.2 L948.9 216.2Z"/><path d="M960.4 210.8 L966.6 210.8 L966.6 217.2 L960.4 217.2Z"/><path d="M967.9 213.8 L974.1 213.8 L974.1 220.2 L967.9 220.2Z"/><path d="M903.9 223.8 L910.1 223.8 L910.1 230.2 L903.9 230.2Z"/><path d="M916.9 222.3 L923.1 222.3 L923.1 228.7 L916.9 228.7Z"/><path d="M947.9 220.8 L954.1 220.8 L954.1 227.2 L947.9 227.2Z"/><path d="M961.9 219.8 L968.1 219.8 L968.1 226.2 L961.9 226.2Z"/><path d="M893.9 230.8 L900.1 230.8 L900.1 237.2 L893.9 237.2Z"/><path d="M886.9 233.8 L893.1 233.8 L893.1 240.2 L886.9 240.2Z"/><path d="M912.9 238.8 L919.1 238.8 L919.1 245.2 L912.9 245.2Z"/><path d="M961.9 232.3 L968.1 232.3 L968.1 238.7 L961.9 238.7Z"/><path d="M947.9 233.8 L954.1 233.8 L954.1 240.2 L947.9 240.2Z"/><path d="M901.9 244.8 L908.1 244.8 L908.1 251.2 L901.9 251.2Z"/><path d="M891.9 247.3 L898.1 247.3 L898.1 253.7 L891.9 253.7Z"/><path d="M881.9 249.8 L888.1 249.8 L888.1 256.1 L881.9 256.1Z"/><path d="M948.9 244.8 L955.1 244.8 L955.1 251.2 L948.9 251.2Z"/><path d="M933.9 270.9 L940.1 270.9 L940.1 277.1 L933.9 277.1Z"/><path d="M950.4 267.9 L956.6 267.9 L956.6 274.1 L950.4 274.1Z"/><path d="M960.4 265.9 L966.6 265.9 L966.6 272.1 L960.4 272.1Z"/><path d="M928.9 280.9 L935.1 280.9 L935.1 287.1 L928.9 287.1Z"/><path d="M927.9 289.4 L934.1 289.4 L934.1 295.6 L927.9 295.6Z"/><path d="M937.9 299.4 L944.1 299.4 L944.1 305.6 L937.9 305.6Z"/><path d="M956.9 297.9 L963.1 297.9 L963.1 304.1 L956.9 304.1Z"/><path d="M935.4 307.9 L941.6 307.9 L941.6 314.1 L935.4 314.1Z"/><path d="M952.9 307.9 L959.1 307.9 L959.1 314.1 L952.9 314.1Z"/><path d="M963.9 307.9 L970.1 307.9 L970.1 314.1 L963.9 314.1Z"/><path d="M940.4 317.9 L946.6 317.9 L946.6 324.1 L940.4 324.1Z"/><path d="M887.0 352.1 L892.9 350.0 L895.0 355.9 L889.1 358.0Z"/><path d="M897.0 349.1 L902.9 347.0 L905.0 352.9 L899.1 355.0Z"/><path d="M907.0 344.1 L912.9 342.0 L915.0 347.9 L909.1 350.0Z"/><path d="M919.5 337.1 L925.4 335.0 L927.5 340.9 L921.6 343.0Z"/><path d="M876.0 359.1 L881.9 357.0 L884.0 362.9 L878.1 365.0Z"/><path d="M864.5 368.1 L870.4 366.0 L872.5 371.9 L866.6 374.0Z"/><path d="M883.0 373.1 L888.9 371.0 L891.0 376.9 L885.1 379.0Z"/><path d="M894.5 374.1 L900.4 372.0 L902.5 377.9 L896.6 380.0Z"/><path d="M906.0 370.6 L911.9 368.5 L914.0 374.4 L908.1 376.5Z"/><path d="M914.5 364.1 L920.4 362.0 L922.5 367.9 L916.6 370.0Z"/><path d="M926.0 360.6 L931.9 358.5 L934.0 364.4 L928.1 366.5Z"/><path d="M877.0 384.1 L882.9 382.0 L885.0 387.9 L879.1 390.0Z"/><path d="M886.0 380.6 L891.9 378.5 L894.0 384.4 L888.1 386.5Z"/><path d="M871.0 405.6 L876.9 403.5 L879.0 409.4 L873.1 411.5Z"/><path d="M861.0 412.1 L866.9 410.0 L869.0 415.9 L863.1 418.0Z"/><path d="M851.0 415.6 L856.9 413.5 L859.0 419.4 L853.1 421.5Z"/><path d="M841.0 419.1 L846.9 417.0 L849.0 422.9 L843.1 425.0Z"/><path d="M831.0 423.1 L836.9 421.0 L839.0 426.9 L833.1 429.0Z"/><path d="M821.0 427.1 L826.9 425.0 L829.0 430.9 L823.1 433.0Z"/><path d="M811.0 430.6 L816.9 428.5 L819.0 434.4 L813.1 436.5Z"/><path d="M801.0 434.1 L806.9 432.0 L809.0 437.9 L803.1 440.0Z"/><path d="M874.5 419.1 L880.4 417.0 L882.5 422.9 L876.6 425.0Z"/><path d="M864.5 425.6 L870.4 423.5 L872.5 429.4 L866.6 431.5Z"/><path d="M886.9 258.9 L893.1 258.9 L893.1 265.1 L886.9 265.1Z"/><path d="M896.9 252.8 L903.1 252.8 L903.1 259.1 L896.9 259.1Z"/><path d="M908.9 258.9 L915.1 258.9 L915.1 265.1 L908.9 265.1Z"/><path d="M926.8 223.2 L934.7 223.9 L933.2 240.8 L925.3 240.1Z"/><path d="M929.6 241.8 L937.8 247.5 L927.4 262.2 L919.2 256.5Z"/></g>
<g font-family="Liberation Sans, sans-serif" fill="#2e2e2e" stroke="#fff" stroke-width="0.5" paint-order="stroke" font-size="10">
<text transform="translate(397 240) rotate(0)" font-size="9.8">Novi trg</text>
<text transform="translate(612 320) rotate(0)" font-size="9.8">Glavni trg</text>
<text transform="translate(665 316) rotate(0)" font-size="9.8">Frančiškanski</text>
<text transform="translate(686 329) rotate(0)" font-size="9.8">trg</text>
<text transform="translate(528.5 310.5) rotate(0)" font-size="9.8">Florjanov trg</text>
<text transform="translate(548 351) rotate(-3)" font-size="9.5">Muzejska ul.</text>
<text transform="translate(545 371) rotate(8)" font-size="9.5">Moj Vrti</text>
<text transform="translate(562 401) rotate(3)" font-size="9.8">Breg</text>
<text transform="translate(453 377) rotate(16)" font-size="9.8">Župančičevo Sprehajališče</text>
<text transform="translate(485 311) rotate(0)" font-size="8.6" font-style="italic">Cerkev sv.</text>
<text transform="translate(490 320) rotate(0)" font-size="8.6" font-style="italic">Nikolaja</text>
<text transform="translate(330.5 118) rotate(60)" font-size="9.5">Kettejev Drevored</text>
<text transform="translate(346 253) rotate(-40)" font-size="9.5">Seidlova cesta</text>
<text transform="translate(266 187) rotate(52)" font-size="9.5">Ljubljanska cesta</text>
<text transform="translate(281 228) rotate(72)" font-size="9.5">Sprehajališče</text>
<text transform="translate(438 154) rotate(70)" font-size="9.5">Ulica Talcev</text>
<text transform="translate(468 183) rotate(40)" font-size="9.5">Jerebova ulica</text>
<text transform="translate(616 232) rotate(28)" font-size="9.5">Šolska ulica</text>
<text transform="translate(535 260) rotate(-3)" font-size="9.5">Vrhovčeva ulica</text>
<text transform="translate(524 280) rotate(0)" font-size="9.5">Prešernov</text>
<text transform="translate(541 293) rotate(0)" font-size="9.5">trg</text>
<text transform="translate(392 281) rotate(-35)" font-size="9.5">Na Loki</text>
<text transform="translate(366 434) rotate(15)" font-size="9.5">Kandijska cesta</text>
<text transform="translate(754.5 418) rotate(-43)" font-size="9.5">Jakčeva ulica</text>
<text transform="translate(667 448) rotate(-17)" font-size="9.5">Ragovska ulica</text>
<text transform="translate(936 129) rotate(-56)" font-size="8.5">Ragovo</text>
<text transform="translate(960 385) rotate(0)" font-size="9.5">Levs</text>
<text transform="translate(778 451) rotate(-33)" font-size="9.5">Mušičeva ulica</text>
</g>
<g fill="none" stroke-linecap="round" stroke-linejoin="round">
<g stroke="#00f000" stroke-width="2.3"><path d="M340.5 78.0 C339.9 81.0 337.8 90.0 337.0 96.0 C336.2 102.0 334.8 107.9 336.0 114.0 C337.2 120.1 340.2 125.2 344.0 132.5 C347.8 139.8 354.4 150.2 359.0 157.5 C363.6 164.8 368.3 171.4 371.5 176.0 C374.7 180.6 375.2 182.7 378.0 185.0 C380.8 187.3 383.7 187.9 388.0 190.0 C392.3 192.1 401.3 196.2 404.0 197.5"/><path d="M376.0 183.0 C371.7 185.9 355.8 195.7 350.0 200.5 C344.2 205.3 342.5 210.1 341.0 212.0"/><path d="M424.0 80.0 C425.8 86.3 431.1 104.6 435.0 118.0 C438.9 131.4 443.2 147.6 447.5 160.5 C451.8 173.4 457.3 185.6 461.0 195.5 C464.7 205.4 468.1 215.9 469.5 220.0"/><path d="M447.5 160.5 C450.4 162.8 457.5 168.2 465.0 174.0 C472.5 179.8 480.8 186.1 492.5 195.5 C504.2 204.9 526.2 223.6 535.0 230.5 C543.8 237.4 541.2 237.8 545.0 237.0 C548.8 236.2 552.5 226.8 557.5 225.5 C562.5 224.2 570.6 228.7 575.0 229.0 C579.4 229.3 580.7 228.1 584.0 227.5 C587.3 226.9 589.8 225.2 595.0 225.5 C600.2 225.8 607.1 225.7 615.0 229.0 C622.9 232.3 634.2 241.5 642.5 245.5 C650.8 249.5 657.9 248.8 665.0 253.0 C672.1 257.2 679.7 265.8 685.0 271.0 C690.3 276.2 695.0 281.8 697.0 284.0"/><path d="M465.0 174.0 L454.0 182.0"/><path d="M466.0 267.0 C469.6 263.0 490.6 245.8 487.5 243.0 C484.4 240.2 456.7 248.7 447.5 250.5 C438.3 252.3 440.8 250.7 432.5 254.0 C424.2 257.3 404.2 266.6 397.5 270.5 C390.8 274.4 395.8 273.8 392.5 277.5 C389.2 281.2 380.4 286.7 377.5 292.5 C374.6 298.3 376.1 307.1 375.0 312.5 C373.9 317.9 373.1 322.8 371.0 325.0 C368.9 327.2 366.0 327.2 362.5 326.0 C359.0 324.8 355.0 320.6 350.0 317.5 C345.0 314.4 338.3 310.8 332.5 307.5 C326.7 304.2 318.9 300.8 315.0 297.5 C311.1 294.2 310.0 289.2 309.0 287.5"/><path d="M432.5 254.0 C433.8 256.8 437.1 266.7 440.0 271.0 C442.9 275.3 446.8 278.7 450.0 280.0 C453.2 281.3 456.1 281.5 459.0 279.0 C461.9 276.5 466.1 267.3 467.5 265.0"/><path d="M459.0 279.0 C461.7 282.9 469.8 297.3 475.0 302.5 C480.2 307.7 487.9 302.1 490.0 310.0 C492.1 317.9 487.1 342.3 487.5 350.0 C487.9 357.7 488.8 355.2 492.5 356.0 C496.2 356.8 504.6 356.8 510.0 355.0 C515.4 353.2 520.8 348.8 525.0 345.0 C529.2 341.2 530.8 336.7 535.0 332.5 C539.2 328.3 545.8 322.9 550.0 320.0 C554.2 317.1 558.3 315.8 560.0 315.0"/><path d="M490.0 310.0 C493.3 307.9 503.8 302.5 510.0 297.5 C516.2 292.5 523.3 283.6 527.5 280.0 C531.7 276.4 533.8 276.7 535.0 276.0"/><path d="M494.0 376.0 C495.0 377.5 496.5 382.8 500.0 385.0 C503.5 387.2 508.5 388.0 515.0 389.0 C521.5 390.0 532.4 390.2 539.0 391.0 C545.6 391.8 548.6 394.2 554.5 393.7 C560.4 393.2 566.9 389.4 574.6 388.0 C582.3 386.6 593.4 386.7 600.9 385.0 C608.4 383.3 616.3 379.2 619.4 378.0"/><path d="M532.5 347.5 C532.9 350.4 532.9 360.8 535.0 365.0 C537.1 369.2 540.0 370.2 545.0 372.5 C550.0 374.8 557.5 377.6 565.0 379.0 C572.5 380.4 582.9 380.4 590.0 381.0 C597.1 381.6 602.5 382.8 607.5 382.5 C612.5 382.2 617.9 379.6 620.0 379.0"/><path d="M595.0 225.5 L596.0 253.0"/><path d="M575.0 229.0 C574.8 232.6 576.1 246.5 574.0 250.5 C571.9 254.5 564.4 252.6 562.5 253.0"/><path d="M535.0 254.0 C539.6 253.8 552.3 253.2 562.5 253.0 C572.7 252.8 587.2 252.2 596.0 253.0 C604.8 253.8 609.8 255.0 615.0 258.0 C620.2 261.0 626.0 266.9 627.5 271.0 C629.0 275.1 624.6 280.6 624.0 282.5"/><path d="M642.5 245.5 L627.5 271.0"/><path d="M535.0 294.0 C540.4 293.5 560.2 292.3 567.5 291.0 C574.8 289.7 576.1 284.5 579.0 286.0 C581.9 287.5 583.3 296.7 585.0 300.0 C586.7 303.3 588.3 305.0 589.0 306.0"/><path d="M576.0 319.0 L622.5 301.0"/><path d="M617.5 289.0 C619.2 286.7 624.6 279.0 627.5 275.0 C630.4 271.0 632.9 268.2 635.0 265.0 C637.1 261.8 639.2 257.5 640.0 256.0"/><path d="M624.0 282.5 C629.2 282.9 646.1 285.4 655.0 285.0 C663.9 284.6 672.5 282.1 677.5 280.0 C682.5 277.9 684.2 275.0 685.0 272.5 C685.8 270.0 682.5 266.2 682.0 265.0"/><path d="M655.0 285.0 C655.8 288.8 658.5 302.1 660.0 307.5 C661.5 312.9 663.6 315.0 664.0 317.5 C664.4 320.0 667.3 320.4 662.5 322.5 C657.7 324.6 639.6 328.8 635.0 330.0"/><path d="M655.0 322.5 C655.8 325.4 658.5 336.4 660.0 340.0 C661.5 343.6 663.3 343.3 664.0 344.0"/><path d="M677.5 280.0 C679.2 282.1 686.2 287.9 687.5 292.5 C688.8 297.1 688.3 303.1 685.0 307.5 C681.7 311.9 670.4 317.1 667.5 319.0"/><path d="M540.0 347.0 C548.2 346.8 578.3 346.8 589.0 346.0 C599.7 345.2 601.5 343.1 604.0 342.5"/><path d="M589.0 346.0 C589.3 349.2 590.8 358.1 591.0 365.0 C591.2 371.9 590.2 383.8 590.0 387.5"/><path d="M595.0 411.0 C598.8 410.0 610.8 407.7 617.5 405.0 C624.2 402.3 630.4 398.8 635.0 395.0 C639.6 391.2 643.3 384.6 645.0 382.5"/><path d="M707.5 385.0 C709.6 383.3 715.6 377.3 720.0 375.0 C724.4 372.7 731.7 371.7 734.0 371.0"/><path d="M689.0 440.0 C691.7 436.7 698.2 425.4 705.0 420.0 C711.8 414.6 720.8 413.8 730.0 407.5 C739.2 401.2 751.8 390.6 760.0 382.5 C768.2 374.4 775.8 362.9 779.0 359.0"/><path d="M660.0 451.0 C664.2 449.2 678.3 444.3 685.0 440.0 C691.7 435.7 695.8 429.2 700.0 425.0 C704.2 420.8 708.3 416.7 710.0 415.0"/><path d="M770.0 265.0 C770.8 267.1 773.2 275.0 775.0 277.5 C776.8 280.0 780.0 279.6 781.0 280.0"/><path d="M775.0 271.0 C774.6 269.2 771.8 263.1 772.5 260.5 C773.2 257.9 776.9 255.1 779.0 255.5 C781.1 255.9 782.8 260.4 785.0 263.0 C787.2 265.6 790.0 267.3 792.5 271.0 C795.0 274.7 796.8 280.2 800.0 285.0 C803.2 289.8 810.0 297.5 812.0 300.0"/><path d="M892.0 80.0 C894.3 85.1 903.2 100.4 906.0 110.5 C908.8 120.6 907.0 131.1 908.5 140.5 C910.0 149.9 913.9 162.6 915.0 167.0"/><path d="M896.0 207.5 C899.3 207.6 911.0 206.2 916.0 208.0 C921.0 209.8 924.5 214.2 926.0 218.0 C927.5 221.8 929.2 226.3 925.0 230.5 C920.8 234.7 909.6 239.7 901.0 243.0 C892.4 246.3 878.1 249.2 873.5 250.5"/><path d="M940.0 207.5 L957.0 206.0"/><path d="M942.0 232.5 L958.5 231.0"/><path d="M941.0 243.0 C942.7 245.5 946.8 253.3 951.0 258.0 C955.2 262.7 962.7 267.3 966.0 271.0 C969.3 274.7 970.2 274.2 971.0 280.0 C971.8 285.8 971.0 301.7 971.0 306.0"/><path d="M870.0 253.0 C872.2 256.0 880.7 267.3 883.5 271.0 C886.3 274.7 887.4 271.8 887.0 275.0 C886.6 278.2 885.5 284.6 881.0 290.0 C876.5 295.4 863.5 304.6 860.0 307.5"/><path d="M867.0 361.0 L931.0 327.5"/><path d="M871.0 384.0 L935.0 350.0"/><path d="M868.5 401.0 C865.4 402.2 858.4 404.8 850.0 408.0 C841.6 411.2 826.3 416.0 818.0 420.0 C809.7 424.0 805.5 427.8 800.0 432.0 C794.5 436.2 788.8 441.5 785.0 445.0 C781.2 448.5 778.3 451.7 777.0 453.0"/><path d="M826.0 451.0 C831.0 449.2 848.5 442.2 856.0 440.0 C863.5 437.8 868.5 437.9 871.0 437.5"/><path d="M956.0 386.0 L980.0 384.0"/><path d="M956.0 386.0 C958.5 388.3 966.7 395.8 971.0 400.0 C975.3 404.2 980.2 409.2 982.0 411.0"/><path d="M312.5 437.5 C315.8 436.2 327.2 432.2 332.5 430.0 C337.8 427.8 342.1 425.0 344.0 424.0"/><path d="M280.0 443.0 L285.0 442.0"/><path d="M451.7 443.0 L451.7 453.0"/></g>
<g stroke="#f7a8f2" stroke-width="2.6"><path d="M908.5 179.0 C911.4 180.1 921.0 181.5 926.0 185.5 C931.0 189.5 935.6 196.8 938.5 203.0 C941.4 209.2 943.1 216.3 943.5 223.0 C943.9 229.7 943.1 236.0 941.0 243.0 C938.9 250.0 934.3 258.8 931.0 265.0 C927.7 271.2 922.7 274.6 921.0 280.0 C919.3 285.4 919.3 290.4 921.0 297.5 C922.7 304.6 928.5 313.3 931.0 322.5 C933.5 331.7 933.9 343.3 936.0 352.5 C938.1 361.7 940.2 371.9 943.5 377.5 C946.8 383.1 953.9 384.6 956.0 386.0"/></g>
<g stroke="#ff7c34" stroke-width="2.1"><path d="M412.0 78.0 C412.0 90.5 412.6 135.5 412.0 153.0 C411.4 170.5 409.8 175.6 408.5 183.0 C407.2 190.4 405.2 195.1 404.5 197.5"/><path d="M404.5 197.5 C408.8 198.4 421.6 200.8 430.0 203.0 C438.4 205.2 447.9 206.8 455.0 210.5 C462.1 214.2 466.7 219.2 472.5 225.5 C478.3 231.8 483.3 241.3 490.0 248.0 C496.7 254.7 505.0 261.8 512.5 265.5 C520.0 269.2 528.8 267.8 535.0 270.0 C541.2 272.2 542.5 276.5 550.0 279.0 C557.5 281.5 570.4 284.2 580.0 285.0 C589.6 285.8 601.2 283.3 607.5 284.0 C613.8 284.7 614.2 284.7 617.5 289.0 C620.8 293.3 624.6 301.9 627.5 310.0 C630.4 318.1 632.5 329.2 635.0 337.5 C637.5 345.8 640.8 352.5 642.5 360.0 C644.2 367.5 643.3 375.0 645.0 382.5 C646.7 390.0 650.0 396.2 652.5 405.0 C655.0 413.8 657.8 427.0 660.0 435.0 C662.2 443.0 665.0 450.0 666.0 453.0"/><path d="M404.5 197.5 C401.2 200.9 392.0 211.6 385.0 218.0 C378.0 224.4 369.1 230.7 362.5 236.0 C355.9 241.3 348.4 247.7 345.6 250.0"/><path d="M275.0 172.0 C275.7 173.6 277.0 176.6 279.0 181.3 C281.0 186.0 284.4 194.6 287.0 200.0 C289.6 205.4 291.3 209.5 294.5 214.0 C297.7 218.5 301.9 223.1 306.0 227.0 C310.1 230.9 315.2 234.4 319.4 237.3 C323.6 240.2 326.6 242.4 331.0 244.5 C335.4 246.6 343.6 247.0 345.6 250.0 C347.6 253.0 344.4 257.5 343.0 262.5 C341.6 267.5 339.5 272.5 337.5 280.0 C335.5 287.5 333.9 293.3 331.0 307.5 C328.1 321.7 323.3 349.6 320.0 365.0 C316.7 380.4 312.5 394.2 311.0 400.0"/><path d="M512.5 265.5 C514.1 267.6 518.2 273.5 522.0 278.0 C525.8 282.5 531.2 288.0 535.0 292.5 C538.8 297.0 540.4 301.4 545.0 305.0 C549.6 308.6 556.7 311.7 562.5 314.0 C568.3 316.3 573.8 316.3 580.0 319.0 C586.2 321.7 595.7 324.4 600.0 330.0 C604.3 335.6 603.1 344.6 606.0 352.5 C608.9 360.4 613.9 371.7 617.5 377.5 C621.1 383.3 623.8 385.8 627.5 387.5 C631.2 389.2 637.1 388.3 640.0 387.5 C642.9 386.7 644.2 383.3 645.0 382.5"/></g>
<g stroke="#f21ee6" stroke-width="2.0"><path d="M968.8 76.4 C966.8 80.1 962.1 89.3 956.8 98.4 C951.5 107.5 943.5 120.1 936.8 130.9 C930.1 141.7 921.8 154.7 916.8 163.4 C911.8 172.2 911.0 174.2 906.8 183.4 C902.6 192.6 897.2 207.2 891.8 218.4 C886.4 229.7 879.7 243.1 874.3 250.9 C868.9 258.7 866.4 259.2 859.3 265.4 C852.2 271.6 840.5 280.8 831.8 287.9 C823.0 295.0 813.5 300.8 806.8 307.9 C800.1 315.0 796.0 323.7 791.8 330.4 C787.6 337.1 784.0 343.9 781.8 347.9 C779.5 351.9 778.6 351.9 778.3 354.4 C778.0 356.9 778.1 359.4 779.8 362.9 C781.5 366.4 787.3 370.8 788.3 375.4 C789.3 380.0 790.4 383.7 785.8 390.4 C781.2 397.1 769.1 407.5 760.8 415.4 C752.5 423.3 742.8 431.4 735.8 437.9 C728.8 444.4 721.6 451.6 718.8 454.4"/></g>
<g stroke="#c4000c" stroke-width="3.6"><path d="M275.0 395.0 C279.2 395.4 294.0 396.5 300.0 397.5 C306.0 398.5 306.0 398.5 311.0 401.0 C316.0 403.5 323.5 408.1 330.0 412.5 C336.5 416.9 344.2 422.9 350.0 427.5 C355.8 432.1 359.6 436.4 365.0 440.0 C370.4 443.6 374.2 448.2 382.5 449.0 C390.8 449.8 403.8 446.1 415.0 445.0 C426.2 443.9 434.6 443.0 450.0 442.5 C465.4 442.0 495.4 441.5 507.5 442.0 C519.6 442.5 517.1 443.7 522.5 445.5 C527.9 447.3 537.1 451.8 540.0 453.0"/></g>
<g stroke="#c4000c" stroke-width="2.8"><path d="M311.0 401.0 C310.0 405.4 307.2 418.7 305.0 427.5 C302.8 436.3 299.2 449.6 298.0 454.0"/></g>
</g>
<circle cx="548.7" cy="347.5" r="9.3" fill="none" stroke="#f00010" stroke-width="3.2"/><g fill="none" stroke="#333" stroke-width="1.1"><rect x="322.5" y="250" width="8.5" height="9" rx="2.5"/><path d="M322.5 255h8.5M324 261l-1.5 2M329.5 261l1.5 2"/></g><g stroke="#333" fill="none" stroke-width="1"><circle cx="501.5" cy="333" r="2.6"/><path d="M501.5 330.4v-5M499.5 327.4h4"/></g><rect x="340.5" y="444" width="9.5" height="8" fill="#444"/><text x="342" y="451.5" font-family="Liberation Sans, sans-serif" font-weight="bold" font-size="9" fill="#fff">H</text>
<g font-family="Liberation Sans, sans-serif" font-weight="bold" font-size="10.9">
<g transform="translate(335.5 207.5) rotate(-34)"><text x="0.6" y="0.6" fill="#0c3a0c" stroke="#0c3a0c" stroke-width="1.3" stroke-linejoin="round">JP 799401</text><text fill="#20f020" stroke="#20f020" stroke-width="0.6" stroke-linejoin="round">JP 799401</text></g>
<g transform="translate(434 98) rotate(74)"><text x="0.6" y="0.6" fill="#0c3a0c" stroke="#0c3a0c" stroke-width="1.3" stroke-linejoin="round">JP 799321</text><text fill="#20f020" stroke="#20f020" stroke-width="0.6" stroke-linejoin="round">JP 799321</text></g>
<g transform="translate(396 184) rotate(10)"><text x="0.6" y="0.6" fill="#5a2408" stroke="#5a2408" stroke-width="1.3" stroke-linejoin="round">LG 299004</text><text fill="#ff7d38" stroke="#ff7d38" stroke-width="0.6" stroke-linejoin="round">LG 299004</text></g>
<g transform="translate(479 181) rotate(36)"><text x="0.6" y="0.6" fill="#0c3a0c" stroke="#0c3a0c" stroke-width="1.3" stroke-linejoin="round">JP 799323</text><text fill="#20f020" stroke="#20f020" stroke-width="0.6" stroke-linejoin="round">JP 799323</text></g>
<g transform="translate(466 264) rotate(-52)"><text x="0.6" y="0.6" fill="#0c3a0c" stroke="#0c3a0c" stroke-width="1.3" stroke-linejoin="round">JP 799411</text><text fill="#20f020" stroke="#20f020" stroke-width="0.6" stroke-linejoin="round">JP 799411</text></g>
<g transform="translate(427 231) rotate(62)"><text x="0.6" y="0.6" fill="#0c3a0c" stroke="#0c3a0c" stroke-width="1.3" stroke-linejoin="round">JP 799415</text><text fill="#20f020" stroke="#20f020" stroke-width="0.6" stroke-linejoin="round">JP 799415</text></g>
<g transform="translate(592 264) rotate(-90)"><text x="0.6" y="0.6" fill="#0c3a0c" stroke="#0c3a0c" stroke-width="1.3" stroke-linejoin="round">JP 799335</text><text fill="#20f020" stroke="#20f020" stroke-width="0.6" stroke-linejoin="round">JP 799335</text></g>
<g transform="translate(605 221) rotate(26)"><text x="0.6" y="0.6" fill="#0c3a0c" stroke="#0c3a0c" stroke-width="1.3" stroke-linejoin="round">JP 799333</text><text fill="#20f020" stroke="#20f020" stroke-width="0.6" stroke-linejoin="round">JP 799333</text></g>
<g transform="translate(511 259) rotate(-14)"><text x="0.6" y="0.6" fill="#0c3a0c" stroke="#0c3a0c" stroke-width="1.3" stroke-linejoin="round">JP 799331</text><text fill="#20f020" stroke="#20f020" stroke-width="0.6" stroke-linejoin="round">JP 799331</text></g>
<g transform="translate(672 246) rotate(55)"><text x="0.6" y="0.6" fill="#0c3a0c" stroke="#0c3a0c" stroke-width="1.3" stroke-linejoin="round">JP 799334</text><text fill="#20f020" stroke="#20f020" stroke-width="0.6" stroke-linejoin="round">JP 799334</text></g>
<g transform="translate(877 203) rotate(5)"><text x="0.6" y="0.6" fill="#0c3a0c" stroke="#0c3a0c" stroke-width="1.3" stroke-linejoin="round">JP 799311</text><text fill="#20f020" stroke="#20f020" stroke-width="0.6" stroke-linejoin="round">JP 799311</text></g>
<g transform="translate(919.5 147.5) rotate(-61.5)"><text x="0.6" y="0.6" fill="#4a0a46" stroke="#4a0a46" stroke-width="1.3" stroke-linejoin="round">LZ 299062</text><text fill="#f428ea" stroke="#f428ea" stroke-width="0.6" stroke-linejoin="round">LZ 299062</text></g>
<g transform="translate(326 299.5) rotate(32)"><text x="0.6" y="0.6" fill="#0c3a0c" stroke="#0c3a0c" stroke-width="1.3" stroke-linejoin="round">JP 799413</text><text fill="#20f020" stroke="#20f020" stroke-width="0.6" stroke-linejoin="round">JP 799413</text></g>
<g transform="translate(311.5 385) rotate(-80)"><text x="0.6" y="0.6" fill="#5a2408" stroke="#5a2408" stroke-width="1.3" stroke-linejoin="round">LG 299271</text><text fill="#ff7d38" stroke="#ff7d38" stroke-width="0.6" stroke-linejoin="round">LG 299271</text></g>
<g transform="translate(293 440) rotate(-20)"><text x="0.6" y="0.6" fill="#0c3a0c" stroke="#0c3a0c" stroke-width="1.3" stroke-linejoin="round">JP 799068</text><text fill="#20f020" stroke="#20f020" stroke-width="0.6" stroke-linejoin="round">JP 799068</text></g>
<g transform="translate(445 440) rotate(0)"><text x="0.6" y="0.6" fill="#4a0608" stroke="#4a0608" stroke-width="1.3" stroke-linejoin="round">R2 419/1203</text><text fill="#e01820" stroke="#e01820" stroke-width="0.6" stroke-linejoin="round">R2 419/1203</text></g>
<g transform="translate(524.5 287.5) rotate(0)"><text x="0.6" y="0.6" fill="#0c3a0c" stroke="#0c3a0c" stroke-width="1.3" stroke-linejoin="round">JP 799427</text><text fill="#20f020" stroke="#20f020" stroke-width="0.6" stroke-linejoin="round">JP 799427</text></g>
<g transform="translate(578 326) rotate(-43)"><text x="0.6" y="0.6" fill="#0c3a0c" stroke="#0c3a0c" stroke-width="1.3" stroke-linejoin="round">JP 799428</text><text fill="#20f020" stroke="#20f020" stroke-width="0.6" stroke-linejoin="round">JP 799428</text></g>
<g transform="translate(626 296) rotate(67)"><text x="0.6" y="0.6" fill="#5a2408" stroke="#5a2408" stroke-width="1.3" stroke-linejoin="round">LG 299002</text><text fill="#ff7d38" stroke="#ff7d38" stroke-width="0.6" stroke-linejoin="round">LG 299002</text></g>
<g transform="translate(601 319) rotate(68)"><text x="0.6" y="0.6" fill="#5a2408" stroke="#5a2408" stroke-width="1.3" stroke-linejoin="round">LG 299003</text><text fill="#ff7d38" stroke="#ff7d38" stroke-width="0.6" stroke-linejoin="round">LG 299003</text></g>
<g transform="translate(652 386) rotate(74)"><text x="0.6" y="0.6" fill="#5a2408" stroke="#5a2408" stroke-width="1.3" stroke-linejoin="round">LG 299001</text><text fill="#ff7d38" stroke="#ff7d38" stroke-width="0.6" stroke-linejoin="round">LG 299001</text></g>
<g transform="translate(656 276) rotate(75)"><text x="0.6" y="0.6" fill="#0c3a0c" stroke="#0c3a0c" stroke-width="1.3" stroke-linejoin="round">JP 799343</text><text fill="#20f020" stroke="#20f020" stroke-width="0.6" stroke-linejoin="round">JP 799343</text></g>
<g transform="translate(510 337) rotate(-38)"><text x="0.6" y="0.6" fill="#0c3a0c" stroke="#0c3a0c" stroke-width="1.3" stroke-linejoin="round">JP 799421</text><text fill="#20f020" stroke="#20f020" stroke-width="0.6" stroke-linejoin="round">JP 799421</text></g>
<g transform="translate(523.5 382) rotate(10)"><text x="0.6" y="0.6" fill="#0c3a0c" stroke="#0c3a0c" stroke-width="1.3" stroke-linejoin="round">JP 799431</text><text fill="#20f020" stroke="#20f020" stroke-width="0.6" stroke-linejoin="round">JP 799431</text></g>
<g transform="translate(576 412) rotate(-19)"><text x="0.6" y="0.6" fill="#0c3a0c" stroke="#0c3a0c" stroke-width="1.3" stroke-linejoin="round">JP 799433</text><text fill="#20f020" stroke="#20f020" stroke-width="0.6" stroke-linejoin="round">JP 799433</text></g>
<g transform="translate(710 390) rotate(-47)"><text x="0.6" y="0.6" fill="#0c3a0c" stroke="#0c3a0c" stroke-width="1.3" stroke-linejoin="round">JP 799316</text><text fill="#20f020" stroke="#20f020" stroke-width="0.6" stroke-linejoin="round">JP 799316</text></g>
<g transform="translate(690 425) rotate(-27)"><text x="0.6" y="0.6" fill="#0c3a0c" stroke="#0c3a0c" stroke-width="1.3" stroke-linejoin="round">JP 799314</text><text fill="#20f020" stroke="#20f020" stroke-width="0.6" stroke-linejoin="round">JP 799314</text></g>
<g transform="translate(774 351) rotate(-62)"><text x="0.6" y="0.6" fill="#4a0a46" stroke="#4a0a46" stroke-width="1.3" stroke-linejoin="round">LZ 299061</text><text fill="#f428ea" stroke="#f428ea" stroke-width="0.6" stroke-linejoin="round">LZ 299061</text></g>
<g transform="translate(793 268) rotate(47)"><text x="0.6" y="0.6" fill="#0c3a0c" stroke="#0c3a0c" stroke-width="1.3" stroke-linejoin="round">JP 799313</text><text fill="#20f020" stroke="#20f020" stroke-width="0.6" stroke-linejoin="round">JP 799313</text></g>
<g transform="translate(842 313) rotate(-34)"><text x="0.6" y="0.6" fill="#0c3a0c" stroke="#0c3a0c" stroke-width="1.3" stroke-linejoin="round">JP 799312</text><text fill="#20f020" stroke="#20f020" stroke-width="0.6" stroke-linejoin="round">JP 799312</text></g>
<g transform="translate(885 347) rotate(-28)"><text x="0.6" y="0.6" fill="#0c3a0c" stroke="#0c3a0c" stroke-width="1.3" stroke-linejoin="round">JP 799275</text><text fill="#20f020" stroke="#20f020" stroke-width="0.6" stroke-linejoin="round">JP 799275</text></g>
<g transform="translate(875 375) rotate(-28)"><text x="0.6" y="0.6" fill="#0c3a0c" stroke="#0c3a0c" stroke-width="1.3" stroke-linejoin="round">JP 799271</text><text fill="#20f020" stroke="#20f020" stroke-width="0.6" stroke-linejoin="round">JP 799271</text></g>
<g transform="translate(936 330) rotate(76)"><text x="0.6" y="0.6" fill="#4a2a48" stroke="#4a2a48" stroke-width="1.3" stroke-linejoin="round">LK 299181</text><text fill="#f9a9f3" stroke="#f9a9f3" stroke-width="0.6" stroke-linejoin="round">LK 299181</text></g>
<g transform="translate(792.5 425) rotate(-23)"><text x="0.6" y="0.6" fill="#0c3a0c" stroke="#0c3a0c" stroke-width="1.3" stroke-linejoin="round">JP 799302</text><text fill="#20f020" stroke="#20f020" stroke-width="0.6" stroke-linejoin="round">JP 799302</text></g>
<g transform="translate(837 438) rotate(0)"><text x="0.6" y="0.6" fill="#0c3a0c" stroke="#0c3a0c" stroke-width="1.3" stroke-linejoin="round">JP 799301</text><text fill="#20f020" stroke="#20f020" stroke-width="0.6" stroke-linejoin="round">JP 799301</text></g>
</g>
<rect x="875" y="83.5" width="100.5" height="10" fill="#5b5b5b"/><text x="877" y="92" font-family="Liberation Sans, sans-serif" font-size="10" fill="#fff" textLength="95.5" lengthAdjust="spacingAndGlyphs">© PISO-NOVO MESTO</text><rect x="792" y="439.5" width="183.5" height="10" fill="#5b5b5b"/><text x="793.5" y="448" font-family="Liberation Sans, sans-serif" font-size="10" fill="#fff" textLength="180" lengthAdjust="spacingAndGlyphs">24.06.2014 14:19:05, ewmap, www.realis.si</text>
</svg>
</div>
<!-- table panel -->
<div class="abs gp" style="left:274px;top:478px;width:711px;height:274px;"></div>
<div class="abs" style="left:279px;top:484px;width:701px;height:263px;background:#c6c8c5;"></div>
<svg class="abs" style="left:572px;top:478px;" width="115" height="6" viewBox="0 0 115 6"><rect width="115" height="5.5" fill="#ece9dc"/><path d="M12 2.5H103" stroke="#55607a" stroke-width="1" stroke-dasharray="1 1.5"/><path d="M2.5 5 L5.5 1 L8.5 5Z M106.5 5 L109.5 1 L112.5 5Z" fill="#1c2c6c"/></svg>
<div class="abs nw" id="tbt" style="left:283px;top:490.6px;font-weight:bold;font-size:11px;line-height:14px;letter-spacing:-0.6px;color:#0a0a0a;">cestni odseki</div>
<div class="abs" style="left:283px;top:505px;width:675px;height:1px;background:#111;"></div>
<svg class="abs" style="left:942px;top:488px;" width="16" height="15" viewBox="0 0 16 15"><path d="M4.5 1.5 H12 L14.5 4 V14 H4.5Z" fill="#dcebfb" stroke="#7fa3cf" stroke-width="0.9"/><path d="M12 1.5 V4 H14.5" fill="#fff" stroke="#7fa3cf" stroke-width="0.8"/><rect x="1" y="2.2" width="8.6" height="8.6" fill="#2f9a3a" stroke="#1d6e28" stroke-width="0.6"/><path d="M3 4.2 L7.6 8.8 M7.6 4.2 L3 8.8" stroke="#fff" stroke-width="1.4"/></svg>
<div class="abs" style="left:835px;top:511px;width:88px;height:15px;background:#fff;border:1px solid #aeb1ae;border-top-color:#8c8f8c;border-left-color:#9a9d9a;"></div>
<div class="abs vd nw" style="left:930px;top:511.5px;width:26px;height:15px;border:1px solid #7c7f7c;border-radius:3px;background:linear-gradient(#f6f6f4,#dcdcd8);font-size:10px;line-height:14px;text-align:center;color:#111;">išči</div>
<div class="abs" style="left:963px;top:484px;width:17px;height:263px;background:#ecebe6;"></div>
<svg class="abs" style="left:963px;top:484px;" width="17" height="263" viewBox="0 0 17 263"><path d="M5 10.5 L8.5 7 L12 10.5Z" fill="#333"/><path d="M5 252.5 L8.5 256 L12 252.5Z" fill="#444"/><rect x="0.5" y="17.5" width="15" height="8" rx="2" fill="#e4e4e0" stroke="#8a8a88"/><path d="M4.5 19.5h7M4.5 21.5h7M4.5 23.5h7" stroke="#555" stroke-width="1"/></svg>
<div id="tb">
<div class="r h" style="top:0;"><div class="c c1"><svg class="si" width="7" height="11" viewBox="0 0 7 11"><path d="M3.5 0.5 L6.5 4.2 L0.5 4.2Z M3.5 10.5 L6.5 6.8 L0.5 6.8Z" fill="#e6ebf3"/></svg>št.</div><div class="c c2"><svg class="si" width="7" height="11" viewBox="0 0 7 11"><path d="M3.5 0.5 L6.5 4.2 L0.5 4.2Z M3.5 10.5 L6.5 6.8 L0.5 6.8Z" fill="#e6ebf3"/></svg>kat.</div><div class="c c3"><svg class="si" width="7" height="11" viewBox="0 0 7 11"><path d="M3.5 0.5 L6.5 4.2 L0.5 4.2Z M3.5 10.5 L6.5 6.8 L0.5 6.8Z" fill="#e6ebf3"/></svg>cesta</div><div class="c c4"><svg class="si" width="7" height="11" viewBox="0 0 7 11"><path d="M3.5 0.5 L6.5 4.2 L0.5 4.2Z M3.5 10.5 L6.5 6.8 L0.5 6.8Z" fill="#e6ebf3"/></svg>odsek</div><div class="c c5"><svg class="si" width="7" height="11" viewBox="0 0 7 11"><path d="M3.5 0.5 L6.5 4.2 L0.5 4.2Z M3.5 10.5 L6.5 6.8 L0.5 6.8Z" fill="#e6ebf3"/></svg>opis</div><div class="c c6"><svg class="si" width="7" height="11" viewBox="0 0 7 11"><path d="M3.5 0.5 L6.5 4.2 L0.5 4.2Z M3.5 10.5 L6.5 6.8 L0.5 6.8Z" fill="#e6ebf3"/></svg>dolžina [m]</div></div>
<div class="r o" style="top:17px;"><div class="c c1">1</div><div class="c c2">RT</div><div class="c c3">920</div><div class="c c4">5899</div><div class="c c5">Vahta-Gabrje</div><div class="c c6">11279</div></div>
<div class="r e" style="top:34px;"><div class="c c1">2</div><div class="c c2">R3</div><div class="c c3">668</div><div class="c c4">5846</div><div class="c c5">Gabrje-Ratež</div><div class="c c6">5581</div></div>
<div class="r o" style="top:51px;"><div class="c c1">3</div><div class="c c2">R3</div><div class="c c3">664</div><div class="c c4">2501</div><div class="c c5">Gaber-Uršna S.-Novo m.</div><div class="c c6">22148</div></div>
<div class="r e" style="top:68px;"><div class="c c1">4</div><div class="c c2">R3</div><div class="c c3">651</div><div class="c c4">1601</div><div class="c c5">Rondo Novo mesto (Bučna vas)</div><div class="c c6">108</div></div>
<div class="r o" style="top:85px;"><div class="c c1">5</div><div class="c c2">R3</div><div class="c c3">651</div><div class="c c4">1198</div><div class="c c5">Novo mesto (Bučna vas)-Mirna Peč</div><div class="c c6">15879</div></div>
<div class="r e" style="top:102px;"><div class="c c1">6</div><div class="c c2">R3</div><div class="c c3">651</div><div class="c c4">0399</div><div class="c c5">Bučna vas</div><div class="c c6">1090</div></div>
<div class="r o" style="top:119px;"><div class="c c1">7</div><div class="c c2">R3</div><div class="c c3">651</div><div class="c c4">0252</div><div class="c c5">Karteljevo-Bučna vas</div><div class="c c6">2710</div></div>
<div class="r e" style="top:136px;"><div class="c c1">8</div><div class="c c2">R2</div><div class="c c3">448</div><div class="c c4">1512</div><div class="c c5">Novo mesto-Mačkovec</div><div class="c c6">935</div></div>
<div class="r o" style="top:153px;"><div class="c c1">9</div><div class="c c2">R2</div><div class="c c3">448</div><div class="c c4">1510</div><div class="c c5">Karteljevo-priklj. NM zahod</div><div class="c c6">5756</div></div>
<div class="r e" style="top:170px;"><div class="c c1">10</div><div class="c c2">R2</div><div class="c c3">419</div><div class="c c4">1204</div><div class="c c5">Novo mesto-Šentjernej</div><div class="c c6">15626</div></div>
<div class="r o" style="top:187px;"><div class="c c1">11</div><div class="c c2">R2</div><div class="c c3">419</div><div class="c c4">1203</div><div class="c c5">Soteska-Novo mesto</div><div class="c c6">14471</div></div>
</div>
<div class="abs th nw" id="foot" style="right:55.5px;top:753px;font-size:10.4px;line-height:13px;color:#8ea2bd;">© MESTNA OBČINA NOVO MESTO, Realis d.o.o.</div>
<!-- toolbar -->
<svg class="abs" style="left:990px;top:50px;" width="46" height="490" viewBox="990 50 46 490">
<g fill="none" stroke="#fff" stroke-width="2" stroke-linejoin="miter">
<!-- region select -->
<rect x="1002.8" y="60.8" width="18.6" height="22.2" stroke-width="1.7"/>
<path d="M1013.5 63.5 L1015.5 62.5 L1016.5 66 L1018.5 69.5 L1017 71.5 L1014.5 73.5 L1013 77 L1015.5 78.5 L1016 80.5 L1011.5 80.5 L1008.5 79 L1006.8 75.5 L1006.3 70.5 L1008 66.5 L1011 64.5Z" stroke-width="0.9"/>
<path d="M1005 78.2 H1010.6 M1007.8 75.4 V81" stroke-width="2"/>
<!-- back arrow -->
<path d="M1001.8 104.8 L1010.2 96.6 L1010.2 100.6 L1022.4 100.6 L1022.4 109 L1010.2 109 L1010.2 113 Z"/>
<!-- fwd arrow -->
<path d="M1023 137.3 L1014.6 129.1 L1014.6 133.1 L1001.4 133.1 L1001.4 141.5 L1014.6 141.5 L1014.6 145.5 Z" stroke="#aeaaa6"/>
<!-- zoom in -->
<circle cx="1009.6" cy="165.6" r="6.9"/>
<path d="M1014.2 171.2 L1020.8 180.6" stroke-width="2.6"/>
<path d="M1006.8 165.6 H1012.4 M1009.6 162.8 V168.4" stroke-width="1.6"/>
<!-- zoom out -->
<circle cx="1009.6" cy="197.8" r="6.9"/>
<path d="M1014.2 203.4 L1020.8 212.8" stroke-width="2.6"/>
<path d="M1007.4 197.8 H1011.8" stroke-width="1.6"/>
<!-- pan -->
<path d="M1003 232.7 H1021 M1012 224 V242" stroke-width="2"/>
</g>
<g fill="#fff">
<path d="M1012 220.8 L1015.8 226 L1008.2 226Z M1012 244.8 L1015.8 239.6 L1008.2 239.6Z M1000 232.7 L1005.2 228.9 L1005.2 236.5Z M1024 232.7 L1018.8 228.9 L1018.8 236.5Z"/>
</g>
<!-- info selected -->
<path d="M997.5 279.5 V250.5 H1026.5" fill="none" stroke="#1f4a7c" stroke-width="1"/>
<path d="M997.5 279.5 H1026.5 V250.5" fill="none" stroke="#5f8fc0" stroke-width="1"/>
<text x="1011.5" y="275" font-family="Liberation Serif, serif" font-style="italic" font-weight="bold" font-size="29" fill="#fff" text-anchor="middle">i</text>
<text x="1010.5" y="308.5" font-family="Liberation Serif, serif" font-style="italic" font-weight="bold" font-size="29" fill="#aeaaa6" text-anchor="middle">i</text>
<text x="1017.6" y="307.6" font-family="Liberation Serif, serif" font-style="italic" font-size="12" fill="#aeaaa6" text-anchor="middle">g</text>
<!-- satellite dish -->
<g fill="#aeaaa6" stroke="none">
<path d="M1003.2 322.5 Q1001 333 1012 338.5 L1016.5 336.5 Q1006 331 1007.5 322.5Z"/>
<path d="M1005.5 323 Q1006.5 331.5 1015.8 336.2 L1003.6 322.6Z" />
<path d="M1007.5 337 L1005.2 345 L1013.2 345 L1011.5 338.5Z"/>
<path d="M1008 330 L1013 326 L1014 327.2 L1009 331.2Z"/>
</g>
<g fill="none" stroke="#aeaaa6" stroke-width="1.7">
<path d="M1011.5 323.2 Q1015.5 323.6 1015.8 328"/>
<path d="M1011 319.8 Q1018.8 320 1019.2 328.5"/>
<path d="M1010.5 316.6 Q1022.2 316.6 1022.6 329"/>
</g>
<!-- printer -->
<g fill="none" stroke="#fff" stroke-width="1.5" stroke-linejoin="round">
<path d="M1004.5 391 V381.2 H1014.2 L1018.2 384.6 V391"/>
<path d="M1007.5 384.6 H1012 M1007.5 387.2 H1015.2" stroke-width="1.3"/>
<path d="M999.2 398.2 V392.6 L1002.2 390.6 H1021.8 L1024 392.6 V398 L1021.8 399.8 H1001.2 Z"/>
<path d="M999.8 393.2 H1023.6" stroke-width="1.2"/>
<path d="M1001.4 399.8 V402.4 H1020.8 L1022.2 400.4"/>
</g>
<!-- 3D -->
<g fill="none" stroke="#fff" stroke-width="1.5" stroke-linejoin="round">
<path d="M1000.2 418.6 H1019.4 V434.4 H1000.2Z"/>
<path d="M1000.2 418.6 L1004.4 414.6 H1023.4 L1019.4 418.6 M1023.4 414.6 V430.6 L1019.4 434.4"/>
</g>
<text x="1009.8" y="431.6" font-family="Liberation Sans, sans-serif" font-weight="bold" font-size="13" fill="#fff" text-anchor="middle" textLength="16.5" lengthAdjust="spacingAndGlyphs">3D</text>
<!-- mail -->
<g fill="none" stroke="#fff" stroke-width="1.6">
<rect x="1001.8" y="450.8" width="20.4" height="14.6"/>
<path d="M1002.2 451.4 L1012 459.4 L1021.8 451.4"/>
</g>
<!-- measure -->
<g fill="none" stroke="#fff" stroke-width="1.5">
<path d="M1001.8 513 V527 M1022.2 513 V527 M1005 520.5 H1019"/>
</g>
<path d="M1002.8 520.5 L1007.4 517.5 L1007.4 523.5Z M1021.2 520.5 L1016.6 517.5 L1016.6 523.5Z" fill="#fff"/>
<text x="1012" y="515.2" font-family="Liberation Sans, sans-serif" font-size="9" fill="#fff" text-anchor="middle">m</text>
</svg>
</body>
</html>
